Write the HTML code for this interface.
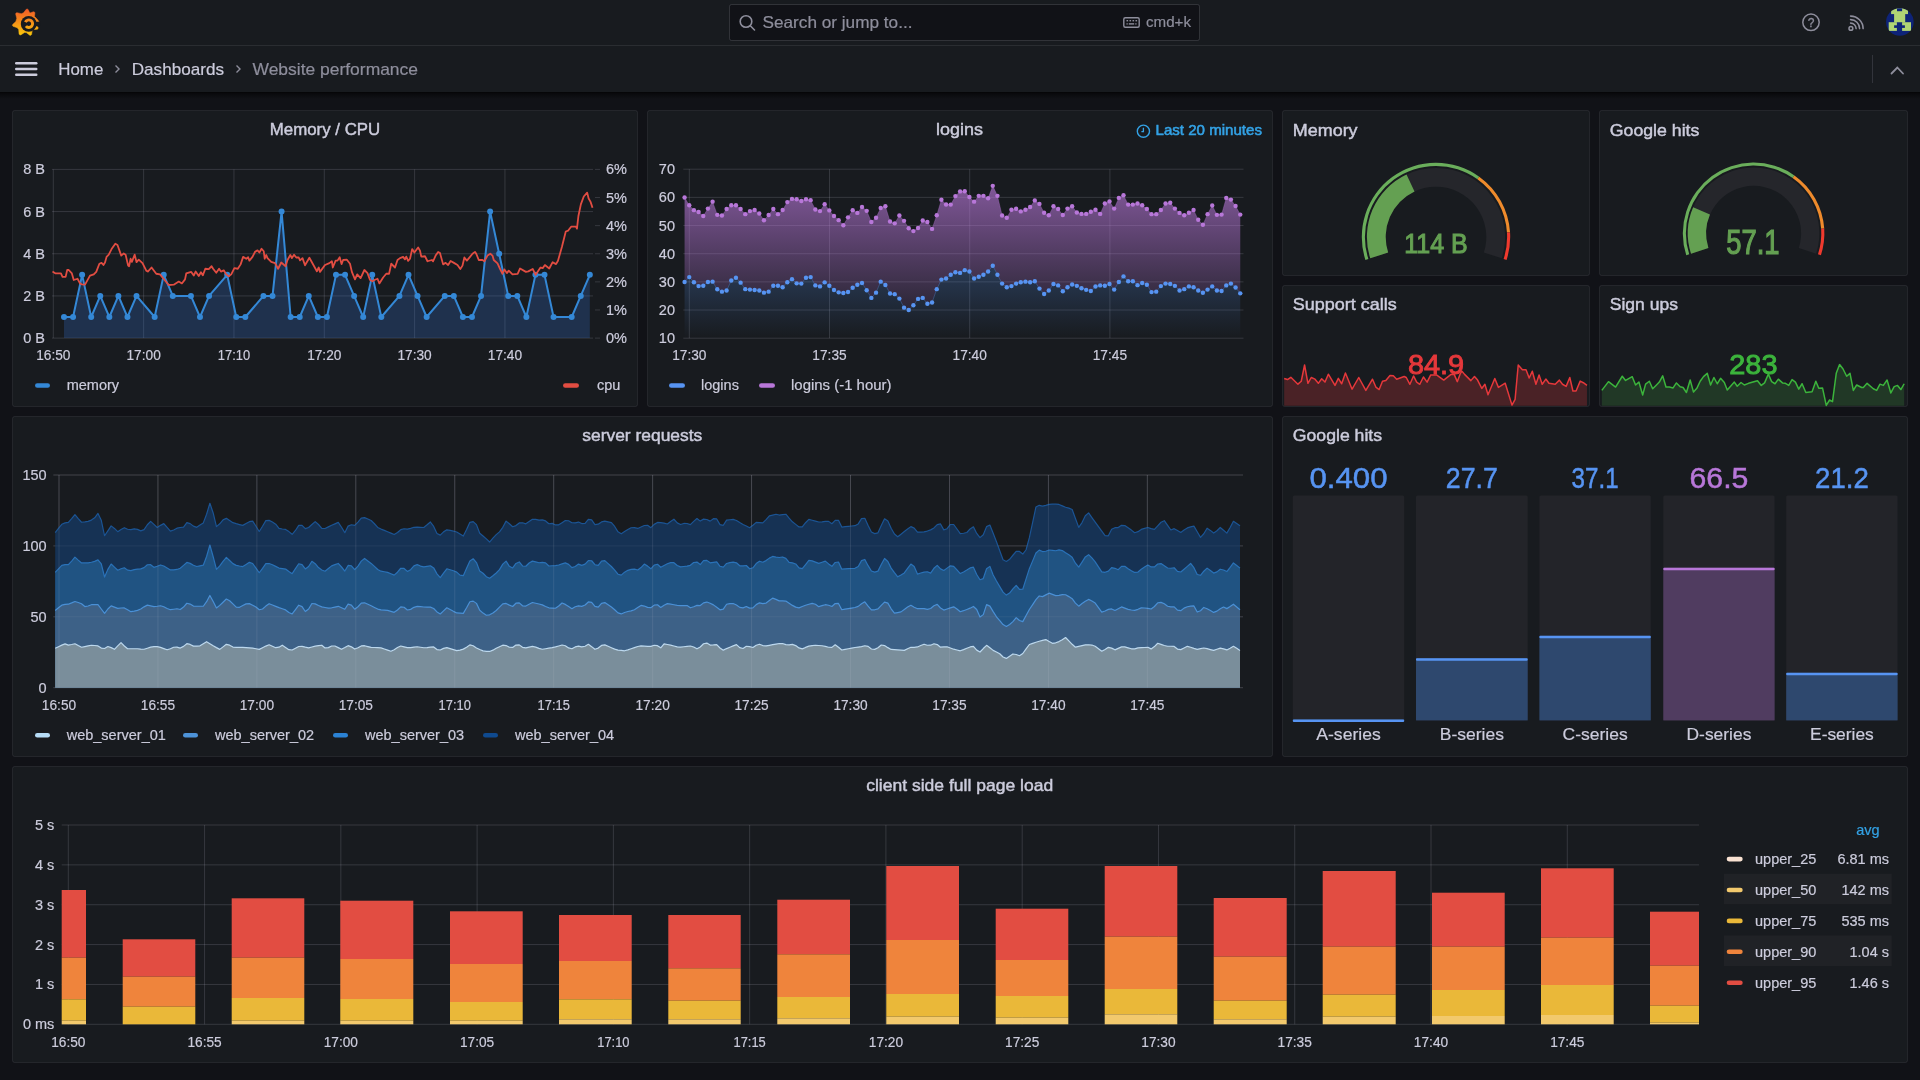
<!DOCTYPE html>
<html><head><meta charset="utf-8"><title>Website performance - Dashboards - Grafana</title>
<style>html,body{margin:0;padding:0;background:#111217;width:1920px;height:1080px;overflow:hidden} svg{will-change:transform}</style>
</head><body>
<svg width="1920" height="1080" viewBox="0 0 1920 1080" font-family='"Liberation Sans", sans-serif' style="display:block">
<defs>
<linearGradient id="gPurple" x1="0" y1="0" x2="0" y2="1" gradientUnits="userSpaceOnUse" gradientTransform=""><stop offset="0" stop-color="#b877d9" stop-opacity="0.55"/><stop offset="1" stop-color="#b877d9" stop-opacity="0"/></linearGradient>
<linearGradient id="gPur" x1="0" y1="169.2" x2="0" y2="338.2" gradientUnits="userSpaceOnUse"><stop offset="0" stop-color="#b877d9" stop-opacity="0.72"/><stop offset="1" stop-color="#b877d9" stop-opacity="0.0"/></linearGradient>
<linearGradient id="gBlu" x1="0" y1="169.2" x2="0" y2="338.2" gradientUnits="userSpaceOnUse"><stop offset="0" stop-color="#5794f2" stop-opacity="0.62"/><stop offset="1" stop-color="#5794f2" stop-opacity="0.0"/></linearGradient>
<radialGradient id="logoG" cx="0.5" cy="0.5" r="0.6" fx="0.5" fy="0.1"></radialGradient>
<linearGradient id="logoL" x1="0" y1="0" x2="0" y2="1"><stop offset="0" stop-color="#f05a28"/><stop offset="1" stop-color="#fbca0a"/></linearGradient>
</defs>
<rect width="1920" height="1080" fill="#111217"/>
<rect x="0" y="0" width="1920" height="92" fill="#181b1f"/>
<rect x="0" y="45" width="1920" height="1" fill="rgba(204,204,220,0.10)"/>
<linearGradient id="shad" x1="0" y1="92" x2="0" y2="99" gradientUnits="userSpaceOnUse"><stop offset="0" stop-color="#000" stop-opacity="0.75"/><stop offset="0.25" stop-color="#000" stop-opacity="0.45"/><stop offset="1" stop-color="#000" stop-opacity="0"/></linearGradient>
<rect x="0" y="92" width="1920" height="7" fill="url(#shad)"/>
<linearGradient id="logoL2" x1="0" y1="9" x2="0" y2="36" gradientUnits="userSpaceOnUse"><stop offset="0" stop-color="#f05a28"/><stop offset="1" stop-color="#fbca0a"/></linearGradient>
<polygon points="35.73,23.82 38.13,27.58 38.11,28.61 37.32,29.25 32.87,29.67 32.31,30.19 31.55,34.59 30.84,35.34 29.82,35.28 26.25,32.59 24.51,32.52 20.73,34.9 19.71,34.87 19.07,34.07 18.68,29.62 17.25,27.78 13.03,26.31 12.41,25.5 12.64,24.5 15.87,21.42 16.77,18.31 15.67,13.98 16.01,13.01 16.97,12.65 21.32,13.66 23.55,12.86 26.26,9.31 27.23,8.98 28.11,9.5 30.03,13.54 29.25,13.22 33.47,11.73 34.46,11.98 34.9,12.9 34.48,16.52 36.37,18.33 38.21,20.41 39.08,21.9 36.77,21.83" fill="url(#logoL2)" stroke="url(#logoL2)" stroke-width="0.5" stroke-linejoin="round"/>
<circle cx="28.7" cy="23.9" r="7.9" fill="#181b1f"/>
<polygon points="30,22.5 40.5,21.4 41,25 38.6,26.6 30,25.2" fill="#181b1f"/>
<path d="M 25.36 22.09 A 3.8 3.8 0 1 1 25.89 26.14" fill="none" stroke="url(#logoL2)" stroke-width="2.9"/>
<rect x="729.5" y="4.5" width="470" height="36" rx="2" fill="#111217" stroke="rgba(204,204,220,0.16)"/>
<circle cx="746" cy="21.5" r="5.8" fill="none" stroke="#8e8e9c" stroke-width="1.6"/>
<line x1="750.3" y1="25.8" x2="754.5" y2="30" stroke="#8e8e9c" stroke-width="1.6" stroke-linecap="round"/>
<text x="762.5" y="28" font-size="16.5" fill="#8e8e9c" stroke="#8e8e9c" stroke-width="0.2" textLength="150" lengthAdjust="spacingAndGlyphs" >Search or jump to...</text>
<rect x="1123.8" y="17.8" width="15.4" height="9.4" rx="1.5" fill="none" stroke="#8e8e9c" stroke-width="1.4"/>
<rect x="1126.5" y="20" width="1.6" height="1.4" fill="#8e8e9c"/>
<rect x="1129.5" y="20" width="1.6" height="1.4" fill="#8e8e9c"/>
<rect x="1132.5" y="20" width="1.6" height="1.4" fill="#8e8e9c"/>
<rect x="1135.5" y="20" width="1.6" height="1.4" fill="#8e8e9c"/>
<rect x="1126.5" y="23.2" width="1.2" height="1.4" fill="#8e8e9c"/><rect x="1128.8" y="23.2" width="5.4" height="1.4" fill="#8e8e9c"/><rect x="1135.3" y="23.2" width="1.2" height="1.4" fill="#8e8e9c"/>
<text x="1146" y="27" font-size="15" fill="#8e8e9c" stroke="#8e8e9c" stroke-width="0.2" textLength="45" lengthAdjust="spacingAndGlyphs" >cmd+k</text>
<circle cx="1811" cy="22.3" r="8.2" fill="none" stroke="#8e8e9c" stroke-width="1.5"/>
<text x="1811" y="26.8" font-size="12" fill="#8e8e9c" text-anchor="middle" stroke="#8e8e9c" stroke-width="0.3" >?</text>
<circle cx="1850.9" cy="28.4" r="1.9" fill="none" stroke="#8e8e9c" stroke-width="1.5"/>
<path d="M 1850.6 23.1 A 5.5 5.5 0 0 1 1856.1 28.6" fill="none" stroke="#8e8e9c" stroke-width="1.6" stroke-linecap="round"/>
<path d="M 1850.6 19.6 A 9.0 9.0 0 0 1 1859.6 28.6" fill="none" stroke="#8e8e9c" stroke-width="1.6" stroke-linecap="round"/>
<path d="M 1850.6 16.1 A 12.5 12.5 0 0 1 1863.1 28.6" fill="none" stroke="#8e8e9c" stroke-width="1.6" stroke-linecap="round"/>
<g><clipPath id="avc"><circle cx="1899.85" cy="22" r="13.8"/></clipPath><g clip-path="url(#avc)">
<rect x="1885" y="7" width="30" height="30" fill="#0e2378"/>
<rect x="1891.1" y="8" width="16.9" height="6.1" fill="#b0d474"/>
<rect x="1897" y="7" width="5.1" height="4.2" fill="#0e2378"/>
<rect x="1894.1" y="13.9" width="11.1" height="8.5" fill="#b0d474"/>
<rect x="1888.7" y="22.2" width="22.3" height="8.7" fill="#b0d474"/>
<rect x="1896.9" y="22.3" width="5.2" height="10" fill="#0e2378"/>
<rect x="1894.1" y="25.3" width="10.8" height="2.6" fill="#0e2378"/>
</g></g>
<rect x="15" y="62.0" width="22.5" height="2.4" rx="1.2" fill="#ccccdc"/>
<rect x="15" y="67.8" width="22.5" height="2.4" rx="1.2" fill="#ccccdc"/>
<rect x="15" y="73.5" width="22.5" height="2.4" rx="1.2" fill="#ccccdc"/>
<text x="58.3" y="75" font-size="17" fill="#ccccdc" stroke="#ccccdc" stroke-width="0.2" textLength="45" lengthAdjust="spacingAndGlyphs" >Home</text>
<path d="M 115.5 65.5 L 119 69 L 115.5 72.5" fill="none" stroke="#8e8e9c" stroke-width="1.4"/>
<text x="131.7" y="75" font-size="17" fill="#ccccdc" stroke="#ccccdc" stroke-width="0.2" textLength="92.3" lengthAdjust="spacingAndGlyphs" >Dashboards</text>
<path d="M 236.5 65.5 L 240 69 L 236.5 72.5" fill="none" stroke="#8e8e9c" stroke-width="1.4"/>
<text x="252.5" y="75" font-size="17" fill="#8e8e9c" stroke="#8e8e9c" stroke-width="0.2" textLength="165.5" lengthAdjust="spacingAndGlyphs" >Website performance</text>
<rect x="1872" y="55" width="1" height="28" fill="rgba(204,204,220,0.15)"/>
<path d="M 1891.5 73.5 L 1897.3 67.5 L 1903 73.5" fill="none" stroke="#8e8e9c" stroke-width="1.8" stroke-linecap="round"/>
<rect x="12.5" y="110.5" width="625" height="296" rx="2" fill="#181b1f" stroke="rgba(204,204,220,0.09)" stroke-width="1"/>
<text x="325" y="135.2" font-size="17" fill="#ccccdc" text-anchor="middle" stroke="#ccccdc" stroke-width="0.45" textLength="110.4" lengthAdjust="spacingAndGlyphs" >Memory / CPU</text>
<line x1="52" y1="338.1" x2="593" y2="338.1" stroke="rgba(204,204,220,0.17)" stroke-width="1"/>
<text x="45" y="343.1" font-size="14.5" fill="#ccccdc" text-anchor="end" stroke="#ccccdc" stroke-width="0.2" >0 B</text>
<line x1="52" y1="295.93" x2="593" y2="295.93" stroke="rgba(204,204,220,0.17)" stroke-width="1"/>
<text x="45" y="300.93" font-size="14.5" fill="#ccccdc" text-anchor="end" stroke="#ccccdc" stroke-width="0.2" >2 B</text>
<line x1="52" y1="253.75" x2="593" y2="253.75" stroke="rgba(204,204,220,0.17)" stroke-width="1"/>
<text x="45" y="258.75" font-size="14.5" fill="#ccccdc" text-anchor="end" stroke="#ccccdc" stroke-width="0.2" >4 B</text>
<line x1="52" y1="211.58" x2="593" y2="211.58" stroke="rgba(204,204,220,0.17)" stroke-width="1"/>
<text x="45" y="216.58" font-size="14.5" fill="#ccccdc" text-anchor="end" stroke="#ccccdc" stroke-width="0.2" >6 B</text>
<line x1="52" y1="169.4" x2="593" y2="169.4" stroke="rgba(204,204,220,0.17)" stroke-width="1"/>
<text x="45" y="174.4" font-size="14.5" fill="#ccccdc" text-anchor="end" stroke="#ccccdc" stroke-width="0.2" >8 B</text>
<line x1="53.3" y1="169.4" x2="53.3" y2="338.1" stroke="rgba(204,204,220,0.17)" stroke-width="1"/>
<text x="53.3" y="360" font-size="14.5" fill="#ccccdc" text-anchor="middle" stroke="#ccccdc" stroke-width="0.2" textLength="34.28" lengthAdjust="spacingAndGlyphs" >16:50</text>
<line x1="143.63" y1="169.4" x2="143.63" y2="338.1" stroke="rgba(204,204,220,0.17)" stroke-width="1"/>
<text x="143.63" y="360" font-size="14.5" fill="#ccccdc" text-anchor="middle" stroke="#ccccdc" stroke-width="0.2" textLength="34.28" lengthAdjust="spacingAndGlyphs" >17:00</text>
<line x1="233.96" y1="169.4" x2="233.96" y2="338.1" stroke="rgba(204,204,220,0.17)" stroke-width="1"/>
<text x="233.96" y="360" font-size="14.5" fill="#ccccdc" text-anchor="middle" stroke="#ccccdc" stroke-width="0.2" textLength="32.28" lengthAdjust="spacingAndGlyphs" >17:10</text>
<line x1="324.29" y1="169.4" x2="324.29" y2="338.1" stroke="rgba(204,204,220,0.17)" stroke-width="1"/>
<text x="324.29" y="360" font-size="14.5" fill="#ccccdc" text-anchor="middle" stroke="#ccccdc" stroke-width="0.2" textLength="34.28" lengthAdjust="spacingAndGlyphs" >17:20</text>
<line x1="414.62" y1="169.4" x2="414.62" y2="338.1" stroke="rgba(204,204,220,0.17)" stroke-width="1"/>
<text x="414.62" y="360" font-size="14.5" fill="#ccccdc" text-anchor="middle" stroke="#ccccdc" stroke-width="0.2" textLength="34.28" lengthAdjust="spacingAndGlyphs" >17:30</text>
<line x1="504.95" y1="169.4" x2="504.95" y2="338.1" stroke="rgba(204,204,220,0.17)" stroke-width="1"/>
<text x="504.95" y="360" font-size="14.5" fill="#ccccdc" text-anchor="middle" stroke="#ccccdc" stroke-width="0.2" textLength="34.28" lengthAdjust="spacingAndGlyphs" >17:40</text>
<line x1="595" y1="338.1" x2="600" y2="338.1" stroke="rgba(204,204,220,0.17)" stroke-width="1"/>
<text x="606" y="343.1" font-size="14.5" fill="#ccccdc" stroke="#ccccdc" stroke-width="0.2" >0%</text>
<line x1="595" y1="309.98" x2="600" y2="309.98" stroke="rgba(204,204,220,0.17)" stroke-width="1"/>
<text x="606" y="314.98" font-size="14.5" fill="#ccccdc" stroke="#ccccdc" stroke-width="0.2" >1%</text>
<line x1="595" y1="281.87" x2="600" y2="281.87" stroke="rgba(204,204,220,0.17)" stroke-width="1"/>
<text x="606" y="286.87" font-size="14.5" fill="#ccccdc" stroke="#ccccdc" stroke-width="0.2" >2%</text>
<line x1="595" y1="253.75" x2="600" y2="253.75" stroke="rgba(204,204,220,0.17)" stroke-width="1"/>
<text x="606" y="258.75" font-size="14.5" fill="#ccccdc" stroke="#ccccdc" stroke-width="0.2" >3%</text>
<line x1="595" y1="225.63" x2="600" y2="225.63" stroke="rgba(204,204,220,0.17)" stroke-width="1"/>
<text x="606" y="230.63" font-size="14.5" fill="#ccccdc" stroke="#ccccdc" stroke-width="0.2" >4%</text>
<line x1="595" y1="197.52" x2="600" y2="197.52" stroke="rgba(204,204,220,0.17)" stroke-width="1"/>
<text x="606" y="202.52" font-size="14.5" fill="#ccccdc" stroke="#ccccdc" stroke-width="0.2" >5%</text>
<line x1="595" y1="169.4" x2="600" y2="169.4" stroke="rgba(204,204,220,0.17)" stroke-width="1"/>
<text x="606" y="174.4" font-size="14.5" fill="#ccccdc" stroke="#ccccdc" stroke-width="0.2" >6%</text>
<polygon points="64,338.1 64,317.01 73.07,317.01 82.13,274.84 91.2,317.01 100.26,295.93 109.33,317.01 118.4,295.93 127.46,317.01 136.53,295.93 154.66,317.01 163.73,274.84 172.79,295.93 190.92,295.93 199.99,317.01 209.06,295.93 227.19,274.84 236.25,317.01 245.32,317.01 263.45,295.93 272.52,295.93 281.58,211.58 290.65,317.01 299.72,317.01 308.78,295.93 317.85,317.01 326.91,317.01 335.98,274.84 345.05,274.84 354.11,295.93 363.18,317.01 372.24,274.84 381.31,317.01 399.44,295.93 408.51,274.84 417.57,295.93 426.64,317.01 444.77,295.93 453.84,295.93 462.9,317.01 471.97,317.01 481.04,295.93 490.1,211.58 499.17,253.75 508.23,295.93 517.3,295.93 526.37,317.01 535.43,274.84 544.5,274.84 553.56,317.01 571.7,317.01 580.76,295.93 589.83,274.84 589.83,338.1" fill="#3274d9" fill-opacity="0.25"/>
<polyline points="64,317.01 73.07,317.01 82.13,274.84 91.2,317.01 100.26,295.93 109.33,317.01 118.4,295.93 127.46,317.01 136.53,295.93 154.66,317.01 163.73,274.84 172.79,295.93 190.92,295.93 199.99,317.01 209.06,295.93 227.19,274.84 236.25,317.01 245.32,317.01 263.45,295.93 272.52,295.93 281.58,211.58 290.65,317.01 299.72,317.01 308.78,295.93 317.85,317.01 326.91,317.01 335.98,274.84 345.05,274.84 354.11,295.93 363.18,317.01 372.24,274.84 381.31,317.01 399.44,295.93 408.51,274.84 417.57,295.93 426.64,317.01 444.77,295.93 453.84,295.93 462.9,317.01 471.97,317.01 481.04,295.93 490.1,211.58 499.17,253.75 508.23,295.93 517.3,295.93 526.37,317.01 535.43,274.84 544.5,274.84 553.56,317.01 571.7,317.01 580.76,295.93 589.83,274.84" fill="none" stroke="#3488d6" stroke-width="2" stroke-linejoin="round"/>
<circle cx="64" cy="317.01" r="3" fill="#3488d6"/>
<circle cx="73.07" cy="317.01" r="3" fill="#3488d6"/>
<circle cx="82.13" cy="274.84" r="3" fill="#3488d6"/>
<circle cx="91.2" cy="317.01" r="3" fill="#3488d6"/>
<circle cx="100.26" cy="295.93" r="3" fill="#3488d6"/>
<circle cx="109.33" cy="317.01" r="3" fill="#3488d6"/>
<circle cx="118.4" cy="295.93" r="3" fill="#3488d6"/>
<circle cx="127.46" cy="317.01" r="3" fill="#3488d6"/>
<circle cx="136.53" cy="295.93" r="3" fill="#3488d6"/>
<circle cx="154.66" cy="317.01" r="3" fill="#3488d6"/>
<circle cx="163.73" cy="274.84" r="3" fill="#3488d6"/>
<circle cx="172.79" cy="295.93" r="3" fill="#3488d6"/>
<circle cx="190.92" cy="295.93" r="3" fill="#3488d6"/>
<circle cx="199.99" cy="317.01" r="3" fill="#3488d6"/>
<circle cx="209.06" cy="295.93" r="3" fill="#3488d6"/>
<circle cx="227.19" cy="274.84" r="3" fill="#3488d6"/>
<circle cx="236.25" cy="317.01" r="3" fill="#3488d6"/>
<circle cx="245.32" cy="317.01" r="3" fill="#3488d6"/>
<circle cx="263.45" cy="295.93" r="3" fill="#3488d6"/>
<circle cx="272.52" cy="295.93" r="3" fill="#3488d6"/>
<circle cx="281.58" cy="211.58" r="3" fill="#3488d6"/>
<circle cx="290.65" cy="317.01" r="3" fill="#3488d6"/>
<circle cx="299.72" cy="317.01" r="3" fill="#3488d6"/>
<circle cx="308.78" cy="295.93" r="3" fill="#3488d6"/>
<circle cx="317.85" cy="317.01" r="3" fill="#3488d6"/>
<circle cx="326.91" cy="317.01" r="3" fill="#3488d6"/>
<circle cx="335.98" cy="274.84" r="3" fill="#3488d6"/>
<circle cx="345.05" cy="274.84" r="3" fill="#3488d6"/>
<circle cx="354.11" cy="295.93" r="3" fill="#3488d6"/>
<circle cx="363.18" cy="317.01" r="3" fill="#3488d6"/>
<circle cx="372.24" cy="274.84" r="3" fill="#3488d6"/>
<circle cx="381.31" cy="317.01" r="3" fill="#3488d6"/>
<circle cx="399.44" cy="295.93" r="3" fill="#3488d6"/>
<circle cx="408.51" cy="274.84" r="3" fill="#3488d6"/>
<circle cx="417.57" cy="295.93" r="3" fill="#3488d6"/>
<circle cx="426.64" cy="317.01" r="3" fill="#3488d6"/>
<circle cx="444.77" cy="295.93" r="3" fill="#3488d6"/>
<circle cx="453.84" cy="295.93" r="3" fill="#3488d6"/>
<circle cx="462.9" cy="317.01" r="3" fill="#3488d6"/>
<circle cx="471.97" cy="317.01" r="3" fill="#3488d6"/>
<circle cx="481.04" cy="295.93" r="3" fill="#3488d6"/>
<circle cx="490.1" cy="211.58" r="3" fill="#3488d6"/>
<circle cx="499.17" cy="253.75" r="3" fill="#3488d6"/>
<circle cx="508.23" cy="295.93" r="3" fill="#3488d6"/>
<circle cx="517.3" cy="295.93" r="3" fill="#3488d6"/>
<circle cx="526.37" cy="317.01" r="3" fill="#3488d6"/>
<circle cx="535.43" cy="274.84" r="3" fill="#3488d6"/>
<circle cx="544.5" cy="274.84" r="3" fill="#3488d6"/>
<circle cx="553.56" cy="317.01" r="3" fill="#3488d6"/>
<circle cx="571.7" cy="317.01" r="3" fill="#3488d6"/>
<circle cx="580.76" cy="295.93" r="3" fill="#3488d6"/>
<circle cx="589.83" cy="274.84" r="3" fill="#3488d6"/>
<polyline points="52.5,271.56 55.62,273.44 60.94,273.44 62.5,276.88 65.62,276.88 67.19,270 68.75,270 71.88,273.44 73.75,280 77.5,278.75 80,283.44 81.88,284.38 85,284.69 90,275.62 93.75,274.38 96.25,271.88 99.38,263.75 101.56,262.81 103.44,265 105,262.5 106.56,256.88 108.75,254.69 111.56,249.06 115.31,243.75 117.5,245 121.25,255.62 123.75,253.44 125.62,254.69 128.12,265.62 129.06,266.25 130.62,258.75 131.88,261.88 134.69,254.69 136.56,262.19 138.75,259.69 142.5,263.12 146.25,270.62 147.81,271.56 151.56,267.5 156.25,273.75 160,274.38 162.5,277.5 168.75,285 173.75,284.69 178.75,281.56 181.88,283.44 185,279.38 186.25,273.44 191.25,271.88 193.75,275.62 195.62,271.56 198.75,275.94 200.94,272.19 202.81,275.31 205.31,268.75 208.75,269.06 211.56,266.25 213.12,268.75 216.25,272.81 219.06,268.75 220.94,271.56 223.75,270.31 226.25,274.38 228.75,276.25 231.25,274.38 234.38,268.12 237.81,268.75 240.62,264.38 243.12,256.88 246.25,258.75 248.12,257.19 249.38,260.62 252.5,256.88 255,251.88 257.5,250.31 259.38,252.5 261.56,248.75 263.75,251.25 264.69,258.75 266.25,255 267.5,258.12 271.25,261.88 275,263.12 278.12,268.75 281.25,262.5 285.62,266.25 287.5,260 290.31,255 291.88,258.12 294.06,254.69 296.25,257.5 298.75,257.5 300,260.31 302.5,258.12 305,265.31 309.38,257.81 316.88,271.25 318.75,267.5 320,271.88 325,265 329.38,263.12 331.88,261.25 332.81,267.5 335.62,260.62 337.5,260.62 339.69,257.19 341.56,264.06 343.12,260 346.88,259.69 350,263.75 351.88,271.88 355,279.38 357.19,274.38 360.62,278.12 364.38,270 367.5,273.12 370,280 372.5,281.25 374.38,280 377.5,278.75 379.38,283.44 383.12,277.5 386.25,273.75 389.06,273.75 391.25,263.75 395,267.5 397.5,260 400,258.12 403.12,256.88 405,259.38 406.25,256.56 408.12,260.94 410,258.75 412.19,249.06 414.38,252.5 418.12,247.5 420,250.62 421.25,256.56 425,256.25 427.5,261.25 431.88,260 433.12,261.25 435.62,255.62 438.12,251.88 440,253.12 443.12,264.38 445.62,262.81 448.12,265 450.62,260.94 454.38,263.12 457.5,265 460.31,269.06 462.5,265.62 464.38,257.5 466.88,260.62 470,256.88 472.5,253.75 475,251.88 476.25,253.75 478.75,260 482.5,260 484.38,261.25 487.5,255.62 490.31,253.75 492.5,255.62 493.75,260 497.5,263.44 500,268.75 502.5,273.75 504.38,269.38 506.88,273.12 508.75,270.62 512.5,274.38 517.64,273.84 520.07,268.49 525.91,271.89 528.34,271.4 532.71,268.97 535.63,274.81 540.49,267.51 542.92,268 544.87,265.08 549.24,268.49 552.65,262.17 556.05,264.11 557.99,260.71 561.88,247.09 565.77,231.54 568.2,230.56 571.12,226.67 575.98,226.67 576.96,228.62 578.42,215.98 580.85,204.31 583.76,196.53 587.17,192.64 588.63,198.48 590.57,201.88 592.51,207.71" fill="none" stroke="#e24d42" stroke-width="1.8" stroke-linejoin="round"/>
<rect x="35" y="383.2" width="15" height="4.6" rx="2.3" fill="#3488d6"/>
<text x="66.7" y="390" font-size="14.5" fill="#ccccdc" stroke="#ccccdc" stroke-width="0.2" >memory</text>
<rect x="563" y="383.2" width="16" height="4.6" rx="2.3" fill="#e24d42"/>
<text x="597" y="390" font-size="14.5" fill="#ccccdc" stroke="#ccccdc" stroke-width="0.2" >cpu</text>
<rect x="647.5" y="110.5" width="625" height="296" rx="2" fill="#181b1f" stroke="rgba(204,204,220,0.09)" stroke-width="1"/>
<text x="959.5" y="135.2" font-size="17" fill="#ccccdc" text-anchor="middle" stroke="#ccccdc" stroke-width="0.45" textLength="47" lengthAdjust="spacingAndGlyphs" >logins</text>
<circle cx="1143.4" cy="131.2" r="6.1" fill="none" stroke="#33a2e5" stroke-width="1.4"/>
<path d="M 1143.4 127.8 V 131.6 H 1141.4" fill="none" stroke="#33a2e5" stroke-width="1.3"/>
<text x="1155.5" y="134.8" font-size="14.5" fill="#33a2e5" stroke="#33a2e5" stroke-width="0.55" textLength="106.5" lengthAdjust="spacingAndGlyphs" >Last 20 minutes</text>
<line x1="683.3" y1="338.2" x2="1243.5" y2="338.2" stroke="rgba(204,204,220,0.17)" stroke-width="1"/>
<text x="675" y="343.2" font-size="14.5" fill="#ccccdc" text-anchor="end" stroke="#ccccdc" stroke-width="0.2" >10</text>
<line x1="683.3" y1="310.03" x2="1243.5" y2="310.03" stroke="rgba(204,204,220,0.17)" stroke-width="1"/>
<text x="675" y="315.03" font-size="14.5" fill="#ccccdc" text-anchor="end" stroke="#ccccdc" stroke-width="0.2" >20</text>
<line x1="683.3" y1="281.87" x2="1243.5" y2="281.87" stroke="rgba(204,204,220,0.17)" stroke-width="1"/>
<text x="675" y="286.87" font-size="14.5" fill="#ccccdc" text-anchor="end" stroke="#ccccdc" stroke-width="0.2" >30</text>
<line x1="683.3" y1="253.7" x2="1243.5" y2="253.7" stroke="rgba(204,204,220,0.17)" stroke-width="1"/>
<text x="675" y="258.7" font-size="14.5" fill="#ccccdc" text-anchor="end" stroke="#ccccdc" stroke-width="0.2" >40</text>
<line x1="683.3" y1="225.53" x2="1243.5" y2="225.53" stroke="rgba(204,204,220,0.17)" stroke-width="1"/>
<text x="675" y="230.53" font-size="14.5" fill="#ccccdc" text-anchor="end" stroke="#ccccdc" stroke-width="0.2" >50</text>
<line x1="683.3" y1="197.37" x2="1243.5" y2="197.37" stroke="rgba(204,204,220,0.17)" stroke-width="1"/>
<text x="675" y="202.37" font-size="14.5" fill="#ccccdc" text-anchor="end" stroke="#ccccdc" stroke-width="0.2" >60</text>
<line x1="683.3" y1="169.2" x2="1243.5" y2="169.2" stroke="rgba(204,204,220,0.17)" stroke-width="1"/>
<text x="675" y="174.2" font-size="14.5" fill="#ccccdc" text-anchor="end" stroke="#ccccdc" stroke-width="0.2" >70</text>
<line x1="689.3" y1="169.2" x2="689.3" y2="338.2" stroke="rgba(204,204,220,0.17)" stroke-width="1"/>
<text x="689.3" y="360" font-size="14.5" fill="#ccccdc" text-anchor="middle" stroke="#ccccdc" stroke-width="0.2" textLength="34.28" lengthAdjust="spacingAndGlyphs" >17:30</text>
<line x1="829.5" y1="169.2" x2="829.5" y2="338.2" stroke="rgba(204,204,220,0.17)" stroke-width="1"/>
<text x="829.5" y="360" font-size="14.5" fill="#ccccdc" text-anchor="middle" stroke="#ccccdc" stroke-width="0.2" textLength="34.28" lengthAdjust="spacingAndGlyphs" >17:35</text>
<line x1="969.7" y1="169.2" x2="969.7" y2="338.2" stroke="rgba(204,204,220,0.17)" stroke-width="1"/>
<text x="969.7" y="360" font-size="14.5" fill="#ccccdc" text-anchor="middle" stroke="#ccccdc" stroke-width="0.2" textLength="34.28" lengthAdjust="spacingAndGlyphs" >17:40</text>
<line x1="1109.9" y1="169.2" x2="1109.9" y2="338.2" stroke="rgba(204,204,220,0.17)" stroke-width="1"/>
<text x="1109.9" y="360" font-size="14.5" fill="#ccccdc" text-anchor="middle" stroke="#ccccdc" stroke-width="0.2" textLength="34.28" lengthAdjust="spacingAndGlyphs" >17:45</text>
<polygon points="684.58,197.5 689.25,205.28 693.92,210.14 698.59,211.94 703.26,215.97 707.93,208.61 712.6,201.67 717.27,214.86 721.94,215.56 726.61,209.03 731.27,205.28 735.94,205.28 740.61,209.03 745.28,214.17 749.95,211.11 754.62,210 759.29,213.47 763.96,220.28 768.63,215 773.3,209.03 777.97,214.17 782.64,210 787.31,202.08 791.98,198.89 796.65,199.31 801.32,200.97 805.99,199.31 810.66,200.14 815.33,209.44 820,211.11 824.66,204.17 829.33,210.42 834,215.97 838.67,220.14 843.34,225.28 848.01,217.36 852.68,210.14 857.35,212.92 862.02,206.94 866.69,210.83 871.36,221.94 876.03,217.78 880.7,208.06 885.37,206.25 890.04,221.53 894.71,223.33 899.38,215.56 904.05,220.83 908.72,228.19 913.39,231.11 918.05,228.06 922.72,220.56 927.39,221.94 932.06,228.89 936.73,215.28 941.4,199.72 946.07,204.44 950.74,204.58 955.41,196.11 960.08,191.39 964.75,191.25 969.42,196.94 974.09,201.67 978.76,195.83 983.43,195.83 988.1,198.19 992.77,185.83 997.44,195.83 1002.11,215.56 1006.78,217.78 1011.44,209.72 1016.11,208.75 1020.78,211.39 1025.45,209.72 1030.12,206.94 1034.79,200.42 1039.46,203.89 1044.13,212.78 1048.8,215.28 1053.47,206.25 1058.14,209.03 1062.81,215 1067.48,208.61 1072.15,206.25 1076.82,212.5 1081.49,213.89 1086.16,213.89 1090.83,211.81 1095.5,209.72 1100.17,213.89 1104.83,203.47 1109.5,201.39 1114.17,208.61 1118.84,197.92 1123.51,195.14 1128.18,204.58 1132.85,204.58 1137.52,203.47 1142.19,205.28 1146.86,209.03 1151.53,214.17 1156.2,214.17 1160.87,210 1165.54,203.47 1170.21,202.78 1174.88,208.61 1179.55,212.92 1184.22,215.28 1188.89,212.78 1193.56,210 1198.22,219.72 1202.89,224.72 1207.56,214.17 1212.23,205.56 1216.9,214.86 1221.57,214.58 1226.24,197.92 1230.91,199.58 1235.58,205.97 1240.25,214.58 1240.25,293.33 1235.58,287.5 1230.91,283.61 1226.24,285.42 1221.57,290.97 1216.9,290.56 1212.23,286.39 1207.56,289.58 1202.89,292.78 1198.22,290.56 1193.56,287.22 1188.89,286.39 1184.22,289.17 1179.55,290.56 1174.88,285.83 1170.21,284.03 1165.54,283.61 1160.87,286.11 1156.2,291.67 1151.53,292.08 1146.86,284.72 1142.19,283.06 1137.52,285.14 1132.85,281.25 1128.18,281.25 1123.51,276.39 1118.84,281.94 1114.17,289.58 1109.5,284.03 1104.83,285.69 1100.17,285.42 1095.5,286.53 1090.83,290.97 1086.16,289.86 1081.49,288.19 1076.82,285.83 1072.15,284.44 1067.48,287.22 1062.81,291.25 1058.14,285.42 1053.47,284.03 1048.8,290.56 1044.13,294.03 1039.46,288.61 1034.79,281.25 1030.12,282.22 1025.45,281.67 1020.78,282.22 1016.11,283.61 1011.44,286.11 1006.78,287.22 1002.11,283.61 997.44,274.72 992.77,265.69 988.1,271.53 983.43,274.72 978.76,276.81 974.09,278.47 969.42,271.53 964.75,270.14 960.08,272.92 955.41,272.22 950.74,274.72 946.07,278.47 941.4,279.58 936.73,289.17 932.06,302.5 927.39,303.75 922.72,297.92 918.05,298.89 913.39,305.28 908.72,310 904.05,307.64 899.38,298.61 894.71,294.17 890.04,293.47 885.37,285 880.7,281.67 876.03,292.64 871.36,297.92 866.69,290.28 862.02,283.06 857.35,284.72 852.68,287.78 848.01,291.94 843.34,293.06 838.67,292.36 834,290 829.33,285.69 824.66,282.36 820,286.39 815.33,285.42 810.66,277.08 805.99,277.78 801.32,283.61 796.65,283.33 791.98,279.17 787.31,282.22 782.64,287.22 777.97,285.69 773.3,285.69 768.63,291.67 763.96,292.64 759.29,290.56 754.62,290 749.95,289.58 745.28,289.17 740.61,282.64 735.94,277.78 731.27,280.56 726.61,290.56 721.94,291.67 717.27,289.31 712.6,281.67 707.93,281.94 703.26,285.69 698.59,286.11 693.92,282.22 689.25,277.08 684.58,281.94" fill="url(#gPur)"/>
<polygon points="684.58,338.2 684.58,281.94 689.25,277.08 693.92,282.22 698.59,286.11 703.26,285.69 707.93,281.94 712.6,281.67 717.27,289.31 721.94,291.67 726.61,290.56 731.27,280.56 735.94,277.78 740.61,282.64 745.28,289.17 749.95,289.58 754.62,290 759.29,290.56 763.96,292.64 768.63,291.67 773.3,285.69 777.97,285.69 782.64,287.22 787.31,282.22 791.98,279.17 796.65,283.33 801.32,283.61 805.99,277.78 810.66,277.08 815.33,285.42 820,286.39 824.66,282.36 829.33,285.69 834,290 838.67,292.36 843.34,293.06 848.01,291.94 852.68,287.78 857.35,284.72 862.02,283.06 866.69,290.28 871.36,297.92 876.03,292.64 880.7,281.67 885.37,285 890.04,293.47 894.71,294.17 899.38,298.61 904.05,307.64 908.72,310 913.39,305.28 918.05,298.89 922.72,297.92 927.39,303.75 932.06,302.5 936.73,289.17 941.4,279.58 946.07,278.47 950.74,274.72 955.41,272.22 960.08,272.92 964.75,270.14 969.42,271.53 974.09,278.47 978.76,276.81 983.43,274.72 988.1,271.53 992.77,265.69 997.44,274.72 1002.11,283.61 1006.78,287.22 1011.44,286.11 1016.11,283.61 1020.78,282.22 1025.45,281.67 1030.12,282.22 1034.79,281.25 1039.46,288.61 1044.13,294.03 1048.8,290.56 1053.47,284.03 1058.14,285.42 1062.81,291.25 1067.48,287.22 1072.15,284.44 1076.82,285.83 1081.49,288.19 1086.16,289.86 1090.83,290.97 1095.5,286.53 1100.17,285.42 1104.83,285.69 1109.5,284.03 1114.17,289.58 1118.84,281.94 1123.51,276.39 1128.18,281.25 1132.85,281.25 1137.52,285.14 1142.19,283.06 1146.86,284.72 1151.53,292.08 1156.2,291.67 1160.87,286.11 1165.54,283.61 1170.21,284.03 1174.88,285.83 1179.55,290.56 1184.22,289.17 1188.89,286.39 1193.56,287.22 1198.22,290.56 1202.89,292.78 1207.56,289.58 1212.23,286.39 1216.9,290.56 1221.57,290.97 1226.24,285.42 1230.91,283.61 1235.58,287.5 1240.25,293.33 1240.25,338.2" fill="url(#gBlu)"/>
<polyline points="684.58,197.5 689.25,205.28 693.92,210.14 698.59,211.94 703.26,215.97 707.93,208.61 712.6,201.67 717.27,214.86 721.94,215.56 726.61,209.03 731.27,205.28 735.94,205.28 740.61,209.03 745.28,214.17 749.95,211.11 754.62,210 759.29,213.47 763.96,220.28 768.63,215 773.3,209.03 777.97,214.17 782.64,210 787.31,202.08 791.98,198.89 796.65,199.31 801.32,200.97 805.99,199.31 810.66,200.14 815.33,209.44 820,211.11 824.66,204.17 829.33,210.42 834,215.97 838.67,220.14 843.34,225.28 848.01,217.36 852.68,210.14 857.35,212.92 862.02,206.94 866.69,210.83 871.36,221.94 876.03,217.78 880.7,208.06 885.37,206.25 890.04,221.53 894.71,223.33 899.38,215.56 904.05,220.83 908.72,228.19 913.39,231.11 918.05,228.06 922.72,220.56 927.39,221.94 932.06,228.89 936.73,215.28 941.4,199.72 946.07,204.44 950.74,204.58 955.41,196.11 960.08,191.39 964.75,191.25 969.42,196.94 974.09,201.67 978.76,195.83 983.43,195.83 988.1,198.19 992.77,185.83 997.44,195.83 1002.11,215.56 1006.78,217.78 1011.44,209.72 1016.11,208.75 1020.78,211.39 1025.45,209.72 1030.12,206.94 1034.79,200.42 1039.46,203.89 1044.13,212.78 1048.8,215.28 1053.47,206.25 1058.14,209.03 1062.81,215 1067.48,208.61 1072.15,206.25 1076.82,212.5 1081.49,213.89 1086.16,213.89 1090.83,211.81 1095.5,209.72 1100.17,213.89 1104.83,203.47 1109.5,201.39 1114.17,208.61 1118.84,197.92 1123.51,195.14 1128.18,204.58 1132.85,204.58 1137.52,203.47 1142.19,205.28 1146.86,209.03 1151.53,214.17 1156.2,214.17 1160.87,210 1165.54,203.47 1170.21,202.78 1174.88,208.61 1179.55,212.92 1184.22,215.28 1188.89,212.78 1193.56,210 1198.22,219.72 1202.89,224.72 1207.56,214.17 1212.23,205.56 1216.9,214.86 1221.57,214.58 1226.24,197.92 1230.91,199.58 1235.58,205.97 1240.25,214.58" fill="none" stroke="#b877d9" stroke-width="1" stroke-opacity="0.3"/>
<polyline points="684.58,281.94 689.25,277.08 693.92,282.22 698.59,286.11 703.26,285.69 707.93,281.94 712.6,281.67 717.27,289.31 721.94,291.67 726.61,290.56 731.27,280.56 735.94,277.78 740.61,282.64 745.28,289.17 749.95,289.58 754.62,290 759.29,290.56 763.96,292.64 768.63,291.67 773.3,285.69 777.97,285.69 782.64,287.22 787.31,282.22 791.98,279.17 796.65,283.33 801.32,283.61 805.99,277.78 810.66,277.08 815.33,285.42 820,286.39 824.66,282.36 829.33,285.69 834,290 838.67,292.36 843.34,293.06 848.01,291.94 852.68,287.78 857.35,284.72 862.02,283.06 866.69,290.28 871.36,297.92 876.03,292.64 880.7,281.67 885.37,285 890.04,293.47 894.71,294.17 899.38,298.61 904.05,307.64 908.72,310 913.39,305.28 918.05,298.89 922.72,297.92 927.39,303.75 932.06,302.5 936.73,289.17 941.4,279.58 946.07,278.47 950.74,274.72 955.41,272.22 960.08,272.92 964.75,270.14 969.42,271.53 974.09,278.47 978.76,276.81 983.43,274.72 988.1,271.53 992.77,265.69 997.44,274.72 1002.11,283.61 1006.78,287.22 1011.44,286.11 1016.11,283.61 1020.78,282.22 1025.45,281.67 1030.12,282.22 1034.79,281.25 1039.46,288.61 1044.13,294.03 1048.8,290.56 1053.47,284.03 1058.14,285.42 1062.81,291.25 1067.48,287.22 1072.15,284.44 1076.82,285.83 1081.49,288.19 1086.16,289.86 1090.83,290.97 1095.5,286.53 1100.17,285.42 1104.83,285.69 1109.5,284.03 1114.17,289.58 1118.84,281.94 1123.51,276.39 1128.18,281.25 1132.85,281.25 1137.52,285.14 1142.19,283.06 1146.86,284.72 1151.53,292.08 1156.2,291.67 1160.87,286.11 1165.54,283.61 1170.21,284.03 1174.88,285.83 1179.55,290.56 1184.22,289.17 1188.89,286.39 1193.56,287.22 1198.22,290.56 1202.89,292.78 1207.56,289.58 1212.23,286.39 1216.9,290.56 1221.57,290.97 1226.24,285.42 1230.91,283.61 1235.58,287.5 1240.25,293.33" fill="none" stroke="#5794f2" stroke-width="1" stroke-opacity="0.3"/>
<circle cx="684.58" cy="197.5" r="2.2" fill="#b877d9"/>
<circle cx="689.25" cy="205.28" r="2.2" fill="#b877d9"/>
<circle cx="693.92" cy="210.14" r="2.2" fill="#b877d9"/>
<circle cx="698.59" cy="211.94" r="2.2" fill="#b877d9"/>
<circle cx="703.26" cy="215.97" r="2.2" fill="#b877d9"/>
<circle cx="707.93" cy="208.61" r="2.2" fill="#b877d9"/>
<circle cx="712.6" cy="201.67" r="2.2" fill="#b877d9"/>
<circle cx="717.27" cy="214.86" r="2.2" fill="#b877d9"/>
<circle cx="721.94" cy="215.56" r="2.2" fill="#b877d9"/>
<circle cx="726.61" cy="209.03" r="2.2" fill="#b877d9"/>
<circle cx="731.27" cy="205.28" r="2.2" fill="#b877d9"/>
<circle cx="735.94" cy="205.28" r="2.2" fill="#b877d9"/>
<circle cx="740.61" cy="209.03" r="2.2" fill="#b877d9"/>
<circle cx="745.28" cy="214.17" r="2.2" fill="#b877d9"/>
<circle cx="749.95" cy="211.11" r="2.2" fill="#b877d9"/>
<circle cx="754.62" cy="210" r="2.2" fill="#b877d9"/>
<circle cx="759.29" cy="213.47" r="2.2" fill="#b877d9"/>
<circle cx="763.96" cy="220.28" r="2.2" fill="#b877d9"/>
<circle cx="768.63" cy="215" r="2.2" fill="#b877d9"/>
<circle cx="773.3" cy="209.03" r="2.2" fill="#b877d9"/>
<circle cx="777.97" cy="214.17" r="2.2" fill="#b877d9"/>
<circle cx="782.64" cy="210" r="2.2" fill="#b877d9"/>
<circle cx="787.31" cy="202.08" r="2.2" fill="#b877d9"/>
<circle cx="791.98" cy="198.89" r="2.2" fill="#b877d9"/>
<circle cx="796.65" cy="199.31" r="2.2" fill="#b877d9"/>
<circle cx="801.32" cy="200.97" r="2.2" fill="#b877d9"/>
<circle cx="805.99" cy="199.31" r="2.2" fill="#b877d9"/>
<circle cx="810.66" cy="200.14" r="2.2" fill="#b877d9"/>
<circle cx="815.33" cy="209.44" r="2.2" fill="#b877d9"/>
<circle cx="820" cy="211.11" r="2.2" fill="#b877d9"/>
<circle cx="824.66" cy="204.17" r="2.2" fill="#b877d9"/>
<circle cx="829.33" cy="210.42" r="2.2" fill="#b877d9"/>
<circle cx="834" cy="215.97" r="2.2" fill="#b877d9"/>
<circle cx="838.67" cy="220.14" r="2.2" fill="#b877d9"/>
<circle cx="843.34" cy="225.28" r="2.2" fill="#b877d9"/>
<circle cx="848.01" cy="217.36" r="2.2" fill="#b877d9"/>
<circle cx="852.68" cy="210.14" r="2.2" fill="#b877d9"/>
<circle cx="857.35" cy="212.92" r="2.2" fill="#b877d9"/>
<circle cx="862.02" cy="206.94" r="2.2" fill="#b877d9"/>
<circle cx="866.69" cy="210.83" r="2.2" fill="#b877d9"/>
<circle cx="871.36" cy="221.94" r="2.2" fill="#b877d9"/>
<circle cx="876.03" cy="217.78" r="2.2" fill="#b877d9"/>
<circle cx="880.7" cy="208.06" r="2.2" fill="#b877d9"/>
<circle cx="885.37" cy="206.25" r="2.2" fill="#b877d9"/>
<circle cx="890.04" cy="221.53" r="2.2" fill="#b877d9"/>
<circle cx="894.71" cy="223.33" r="2.2" fill="#b877d9"/>
<circle cx="899.38" cy="215.56" r="2.2" fill="#b877d9"/>
<circle cx="904.05" cy="220.83" r="2.2" fill="#b877d9"/>
<circle cx="908.72" cy="228.19" r="2.2" fill="#b877d9"/>
<circle cx="913.39" cy="231.11" r="2.2" fill="#b877d9"/>
<circle cx="918.05" cy="228.06" r="2.2" fill="#b877d9"/>
<circle cx="922.72" cy="220.56" r="2.2" fill="#b877d9"/>
<circle cx="927.39" cy="221.94" r="2.2" fill="#b877d9"/>
<circle cx="932.06" cy="228.89" r="2.2" fill="#b877d9"/>
<circle cx="936.73" cy="215.28" r="2.2" fill="#b877d9"/>
<circle cx="941.4" cy="199.72" r="2.2" fill="#b877d9"/>
<circle cx="946.07" cy="204.44" r="2.2" fill="#b877d9"/>
<circle cx="950.74" cy="204.58" r="2.2" fill="#b877d9"/>
<circle cx="955.41" cy="196.11" r="2.2" fill="#b877d9"/>
<circle cx="960.08" cy="191.39" r="2.2" fill="#b877d9"/>
<circle cx="964.75" cy="191.25" r="2.2" fill="#b877d9"/>
<circle cx="969.42" cy="196.94" r="2.2" fill="#b877d9"/>
<circle cx="974.09" cy="201.67" r="2.2" fill="#b877d9"/>
<circle cx="978.76" cy="195.83" r="2.2" fill="#b877d9"/>
<circle cx="983.43" cy="195.83" r="2.2" fill="#b877d9"/>
<circle cx="988.1" cy="198.19" r="2.2" fill="#b877d9"/>
<circle cx="992.77" cy="185.83" r="2.2" fill="#b877d9"/>
<circle cx="997.44" cy="195.83" r="2.2" fill="#b877d9"/>
<circle cx="1002.11" cy="215.56" r="2.2" fill="#b877d9"/>
<circle cx="1006.78" cy="217.78" r="2.2" fill="#b877d9"/>
<circle cx="1011.44" cy="209.72" r="2.2" fill="#b877d9"/>
<circle cx="1016.11" cy="208.75" r="2.2" fill="#b877d9"/>
<circle cx="1020.78" cy="211.39" r="2.2" fill="#b877d9"/>
<circle cx="1025.45" cy="209.72" r="2.2" fill="#b877d9"/>
<circle cx="1030.12" cy="206.94" r="2.2" fill="#b877d9"/>
<circle cx="1034.79" cy="200.42" r="2.2" fill="#b877d9"/>
<circle cx="1039.46" cy="203.89" r="2.2" fill="#b877d9"/>
<circle cx="1044.13" cy="212.78" r="2.2" fill="#b877d9"/>
<circle cx="1048.8" cy="215.28" r="2.2" fill="#b877d9"/>
<circle cx="1053.47" cy="206.25" r="2.2" fill="#b877d9"/>
<circle cx="1058.14" cy="209.03" r="2.2" fill="#b877d9"/>
<circle cx="1062.81" cy="215" r="2.2" fill="#b877d9"/>
<circle cx="1067.48" cy="208.61" r="2.2" fill="#b877d9"/>
<circle cx="1072.15" cy="206.25" r="2.2" fill="#b877d9"/>
<circle cx="1076.82" cy="212.5" r="2.2" fill="#b877d9"/>
<circle cx="1081.49" cy="213.89" r="2.2" fill="#b877d9"/>
<circle cx="1086.16" cy="213.89" r="2.2" fill="#b877d9"/>
<circle cx="1090.83" cy="211.81" r="2.2" fill="#b877d9"/>
<circle cx="1095.5" cy="209.72" r="2.2" fill="#b877d9"/>
<circle cx="1100.17" cy="213.89" r="2.2" fill="#b877d9"/>
<circle cx="1104.83" cy="203.47" r="2.2" fill="#b877d9"/>
<circle cx="1109.5" cy="201.39" r="2.2" fill="#b877d9"/>
<circle cx="1114.17" cy="208.61" r="2.2" fill="#b877d9"/>
<circle cx="1118.84" cy="197.92" r="2.2" fill="#b877d9"/>
<circle cx="1123.51" cy="195.14" r="2.2" fill="#b877d9"/>
<circle cx="1128.18" cy="204.58" r="2.2" fill="#b877d9"/>
<circle cx="1132.85" cy="204.58" r="2.2" fill="#b877d9"/>
<circle cx="1137.52" cy="203.47" r="2.2" fill="#b877d9"/>
<circle cx="1142.19" cy="205.28" r="2.2" fill="#b877d9"/>
<circle cx="1146.86" cy="209.03" r="2.2" fill="#b877d9"/>
<circle cx="1151.53" cy="214.17" r="2.2" fill="#b877d9"/>
<circle cx="1156.2" cy="214.17" r="2.2" fill="#b877d9"/>
<circle cx="1160.87" cy="210" r="2.2" fill="#b877d9"/>
<circle cx="1165.54" cy="203.47" r="2.2" fill="#b877d9"/>
<circle cx="1170.21" cy="202.78" r="2.2" fill="#b877d9"/>
<circle cx="1174.88" cy="208.61" r="2.2" fill="#b877d9"/>
<circle cx="1179.55" cy="212.92" r="2.2" fill="#b877d9"/>
<circle cx="1184.22" cy="215.28" r="2.2" fill="#b877d9"/>
<circle cx="1188.89" cy="212.78" r="2.2" fill="#b877d9"/>
<circle cx="1193.56" cy="210" r="2.2" fill="#b877d9"/>
<circle cx="1198.22" cy="219.72" r="2.2" fill="#b877d9"/>
<circle cx="1202.89" cy="224.72" r="2.2" fill="#b877d9"/>
<circle cx="1207.56" cy="214.17" r="2.2" fill="#b877d9"/>
<circle cx="1212.23" cy="205.56" r="2.2" fill="#b877d9"/>
<circle cx="1216.9" cy="214.86" r="2.2" fill="#b877d9"/>
<circle cx="1221.57" cy="214.58" r="2.2" fill="#b877d9"/>
<circle cx="1226.24" cy="197.92" r="2.2" fill="#b877d9"/>
<circle cx="1230.91" cy="199.58" r="2.2" fill="#b877d9"/>
<circle cx="1235.58" cy="205.97" r="2.2" fill="#b877d9"/>
<circle cx="1240.25" cy="214.58" r="2.2" fill="#b877d9"/>
<circle cx="684.58" cy="281.94" r="2.2" fill="#5794f2"/>
<circle cx="689.25" cy="277.08" r="2.2" fill="#5794f2"/>
<circle cx="693.92" cy="282.22" r="2.2" fill="#5794f2"/>
<circle cx="698.59" cy="286.11" r="2.2" fill="#5794f2"/>
<circle cx="703.26" cy="285.69" r="2.2" fill="#5794f2"/>
<circle cx="707.93" cy="281.94" r="2.2" fill="#5794f2"/>
<circle cx="712.6" cy="281.67" r="2.2" fill="#5794f2"/>
<circle cx="717.27" cy="289.31" r="2.2" fill="#5794f2"/>
<circle cx="721.94" cy="291.67" r="2.2" fill="#5794f2"/>
<circle cx="726.61" cy="290.56" r="2.2" fill="#5794f2"/>
<circle cx="731.27" cy="280.56" r="2.2" fill="#5794f2"/>
<circle cx="735.94" cy="277.78" r="2.2" fill="#5794f2"/>
<circle cx="740.61" cy="282.64" r="2.2" fill="#5794f2"/>
<circle cx="745.28" cy="289.17" r="2.2" fill="#5794f2"/>
<circle cx="749.95" cy="289.58" r="2.2" fill="#5794f2"/>
<circle cx="754.62" cy="290" r="2.2" fill="#5794f2"/>
<circle cx="759.29" cy="290.56" r="2.2" fill="#5794f2"/>
<circle cx="763.96" cy="292.64" r="2.2" fill="#5794f2"/>
<circle cx="768.63" cy="291.67" r="2.2" fill="#5794f2"/>
<circle cx="773.3" cy="285.69" r="2.2" fill="#5794f2"/>
<circle cx="777.97" cy="285.69" r="2.2" fill="#5794f2"/>
<circle cx="782.64" cy="287.22" r="2.2" fill="#5794f2"/>
<circle cx="787.31" cy="282.22" r="2.2" fill="#5794f2"/>
<circle cx="791.98" cy="279.17" r="2.2" fill="#5794f2"/>
<circle cx="796.65" cy="283.33" r="2.2" fill="#5794f2"/>
<circle cx="801.32" cy="283.61" r="2.2" fill="#5794f2"/>
<circle cx="805.99" cy="277.78" r="2.2" fill="#5794f2"/>
<circle cx="810.66" cy="277.08" r="2.2" fill="#5794f2"/>
<circle cx="815.33" cy="285.42" r="2.2" fill="#5794f2"/>
<circle cx="820" cy="286.39" r="2.2" fill="#5794f2"/>
<circle cx="824.66" cy="282.36" r="2.2" fill="#5794f2"/>
<circle cx="829.33" cy="285.69" r="2.2" fill="#5794f2"/>
<circle cx="834" cy="290" r="2.2" fill="#5794f2"/>
<circle cx="838.67" cy="292.36" r="2.2" fill="#5794f2"/>
<circle cx="843.34" cy="293.06" r="2.2" fill="#5794f2"/>
<circle cx="848.01" cy="291.94" r="2.2" fill="#5794f2"/>
<circle cx="852.68" cy="287.78" r="2.2" fill="#5794f2"/>
<circle cx="857.35" cy="284.72" r="2.2" fill="#5794f2"/>
<circle cx="862.02" cy="283.06" r="2.2" fill="#5794f2"/>
<circle cx="866.69" cy="290.28" r="2.2" fill="#5794f2"/>
<circle cx="871.36" cy="297.92" r="2.2" fill="#5794f2"/>
<circle cx="876.03" cy="292.64" r="2.2" fill="#5794f2"/>
<circle cx="880.7" cy="281.67" r="2.2" fill="#5794f2"/>
<circle cx="885.37" cy="285" r="2.2" fill="#5794f2"/>
<circle cx="890.04" cy="293.47" r="2.2" fill="#5794f2"/>
<circle cx="894.71" cy="294.17" r="2.2" fill="#5794f2"/>
<circle cx="899.38" cy="298.61" r="2.2" fill="#5794f2"/>
<circle cx="904.05" cy="307.64" r="2.2" fill="#5794f2"/>
<circle cx="908.72" cy="310" r="2.2" fill="#5794f2"/>
<circle cx="913.39" cy="305.28" r="2.2" fill="#5794f2"/>
<circle cx="918.05" cy="298.89" r="2.2" fill="#5794f2"/>
<circle cx="922.72" cy="297.92" r="2.2" fill="#5794f2"/>
<circle cx="927.39" cy="303.75" r="2.2" fill="#5794f2"/>
<circle cx="932.06" cy="302.5" r="2.2" fill="#5794f2"/>
<circle cx="936.73" cy="289.17" r="2.2" fill="#5794f2"/>
<circle cx="941.4" cy="279.58" r="2.2" fill="#5794f2"/>
<circle cx="946.07" cy="278.47" r="2.2" fill="#5794f2"/>
<circle cx="950.74" cy="274.72" r="2.2" fill="#5794f2"/>
<circle cx="955.41" cy="272.22" r="2.2" fill="#5794f2"/>
<circle cx="960.08" cy="272.92" r="2.2" fill="#5794f2"/>
<circle cx="964.75" cy="270.14" r="2.2" fill="#5794f2"/>
<circle cx="969.42" cy="271.53" r="2.2" fill="#5794f2"/>
<circle cx="974.09" cy="278.47" r="2.2" fill="#5794f2"/>
<circle cx="978.76" cy="276.81" r="2.2" fill="#5794f2"/>
<circle cx="983.43" cy="274.72" r="2.2" fill="#5794f2"/>
<circle cx="988.1" cy="271.53" r="2.2" fill="#5794f2"/>
<circle cx="992.77" cy="265.69" r="2.2" fill="#5794f2"/>
<circle cx="997.44" cy="274.72" r="2.2" fill="#5794f2"/>
<circle cx="1002.11" cy="283.61" r="2.2" fill="#5794f2"/>
<circle cx="1006.78" cy="287.22" r="2.2" fill="#5794f2"/>
<circle cx="1011.44" cy="286.11" r="2.2" fill="#5794f2"/>
<circle cx="1016.11" cy="283.61" r="2.2" fill="#5794f2"/>
<circle cx="1020.78" cy="282.22" r="2.2" fill="#5794f2"/>
<circle cx="1025.45" cy="281.67" r="2.2" fill="#5794f2"/>
<circle cx="1030.12" cy="282.22" r="2.2" fill="#5794f2"/>
<circle cx="1034.79" cy="281.25" r="2.2" fill="#5794f2"/>
<circle cx="1039.46" cy="288.61" r="2.2" fill="#5794f2"/>
<circle cx="1044.13" cy="294.03" r="2.2" fill="#5794f2"/>
<circle cx="1048.8" cy="290.56" r="2.2" fill="#5794f2"/>
<circle cx="1053.47" cy="284.03" r="2.2" fill="#5794f2"/>
<circle cx="1058.14" cy="285.42" r="2.2" fill="#5794f2"/>
<circle cx="1062.81" cy="291.25" r="2.2" fill="#5794f2"/>
<circle cx="1067.48" cy="287.22" r="2.2" fill="#5794f2"/>
<circle cx="1072.15" cy="284.44" r="2.2" fill="#5794f2"/>
<circle cx="1076.82" cy="285.83" r="2.2" fill="#5794f2"/>
<circle cx="1081.49" cy="288.19" r="2.2" fill="#5794f2"/>
<circle cx="1086.16" cy="289.86" r="2.2" fill="#5794f2"/>
<circle cx="1090.83" cy="290.97" r="2.2" fill="#5794f2"/>
<circle cx="1095.5" cy="286.53" r="2.2" fill="#5794f2"/>
<circle cx="1100.17" cy="285.42" r="2.2" fill="#5794f2"/>
<circle cx="1104.83" cy="285.69" r="2.2" fill="#5794f2"/>
<circle cx="1109.5" cy="284.03" r="2.2" fill="#5794f2"/>
<circle cx="1114.17" cy="289.58" r="2.2" fill="#5794f2"/>
<circle cx="1118.84" cy="281.94" r="2.2" fill="#5794f2"/>
<circle cx="1123.51" cy="276.39" r="2.2" fill="#5794f2"/>
<circle cx="1128.18" cy="281.25" r="2.2" fill="#5794f2"/>
<circle cx="1132.85" cy="281.25" r="2.2" fill="#5794f2"/>
<circle cx="1137.52" cy="285.14" r="2.2" fill="#5794f2"/>
<circle cx="1142.19" cy="283.06" r="2.2" fill="#5794f2"/>
<circle cx="1146.86" cy="284.72" r="2.2" fill="#5794f2"/>
<circle cx="1151.53" cy="292.08" r="2.2" fill="#5794f2"/>
<circle cx="1156.2" cy="291.67" r="2.2" fill="#5794f2"/>
<circle cx="1160.87" cy="286.11" r="2.2" fill="#5794f2"/>
<circle cx="1165.54" cy="283.61" r="2.2" fill="#5794f2"/>
<circle cx="1170.21" cy="284.03" r="2.2" fill="#5794f2"/>
<circle cx="1174.88" cy="285.83" r="2.2" fill="#5794f2"/>
<circle cx="1179.55" cy="290.56" r="2.2" fill="#5794f2"/>
<circle cx="1184.22" cy="289.17" r="2.2" fill="#5794f2"/>
<circle cx="1188.89" cy="286.39" r="2.2" fill="#5794f2"/>
<circle cx="1193.56" cy="287.22" r="2.2" fill="#5794f2"/>
<circle cx="1198.22" cy="290.56" r="2.2" fill="#5794f2"/>
<circle cx="1202.89" cy="292.78" r="2.2" fill="#5794f2"/>
<circle cx="1207.56" cy="289.58" r="2.2" fill="#5794f2"/>
<circle cx="1212.23" cy="286.39" r="2.2" fill="#5794f2"/>
<circle cx="1216.9" cy="290.56" r="2.2" fill="#5794f2"/>
<circle cx="1221.57" cy="290.97" r="2.2" fill="#5794f2"/>
<circle cx="1226.24" cy="285.42" r="2.2" fill="#5794f2"/>
<circle cx="1230.91" cy="283.61" r="2.2" fill="#5794f2"/>
<circle cx="1235.58" cy="287.5" r="2.2" fill="#5794f2"/>
<circle cx="1240.25" cy="293.33" r="2.2" fill="#5794f2"/>
<rect x="669" y="383.2" width="16" height="4.6" rx="2.3" fill="#5794f2"/>
<text x="701" y="390" font-size="14.5" fill="#ccccdc" stroke="#ccccdc" stroke-width="0.2" >logins</text>
<rect x="759" y="383.2" width="16" height="4.6" rx="2.3" fill="#b877d9"/>
<text x="791" y="390" font-size="14.5" fill="#ccccdc" stroke="#ccccdc" stroke-width="0.2" textLength="100.5" lengthAdjust="spacingAndGlyphs" >logins (-1 hour)</text>
<rect x="1282.5" y="110.5" width="307" height="165" rx="2" fill="#181b1f" stroke="rgba(204,204,220,0.09)" stroke-width="1"/>
<text x="1292.8" y="135.6" font-size="17" fill="#ccccdc" stroke="#ccccdc" stroke-width="0.45" textLength="64.8" lengthAdjust="spacingAndGlyphs" >Memory</text>
<path d="M 1370.28 258.35 A 69.1 69.1 0 1 1 1501.72 258.35 L 1483.84 252.54 A 50.3 50.3 0 1 0 1388.16 252.54 Z" fill="#25262b"/>
<path d="M 1370.28 258.35 A 69.1 69.1 0 0 1 1406.5 174.51 L 1414.53 191.51 A 50.3 50.3 0 0 0 1388.16 252.54 Z" fill="#64a052"/>
<path d="M 1365.43 259.93 A 74.2 74.2 0 0 1 1479.24 176.7 L 1477.43 179.22 A 71.10000000000001 71.10000000000001 0 0 0 1368.38 258.97 Z" fill="#6aae5b"/>
<path d="M 1479.24 176.7 A 74.2 74.2 0 0 1 1510.05 232.34 L 1506.96 232.54 A 71.10000000000001 71.10000000000001 0 0 0 1477.43 179.22 Z" fill="#ef8b2c"/>
<path d="M 1510.05 232.34 A 74.2 74.2 0 0 1 1506.57 259.93 L 1503.62 258.97 A 71.10000000000001 71.10000000000001 0 0 0 1506.96 232.54 Z" fill="#f03a2e"/>
<text x="1436" y="253.4" font-size="27" fill="#64a052" text-anchor="middle" stroke="#64a052" stroke-width="1.0" textLength="63.4" lengthAdjust="spacingAndGlyphs" >114 B</text>
<rect x="1599.5" y="110.5" width="308" height="165" rx="2" fill="#181b1f" stroke="rgba(204,204,220,0.09)" stroke-width="1"/>
<text x="1609.8" y="135.6" font-size="17" fill="#ccccdc" stroke="#ccccdc" stroke-width="0.45" textLength="89.6" lengthAdjust="spacingAndGlyphs" >Google hits</text>
<path d="M 1691.02 253.63 A 65.8 65.8 0 1 1 1816.18 253.63 L 1798.78 247.98 A 47.5 47.5 0 1 0 1708.42 247.98 Z" fill="#25262b"/>
<path d="M 1691.02 253.63 A 65.8 65.8 0 0 1 1693.15 207.32 L 1709.96 214.55 A 47.5 47.5 0 0 0 1708.42 247.98 Z" fill="#64a052"/>
<path d="M 1686.27 255.18 A 70.8 70.8 0 0 1 1794.42 175.45 L 1792.63 177.98 A 67.7 67.7 0 0 0 1689.21 254.22 Z" fill="#6aae5b"/>
<path d="M 1794.42 175.45 A 70.8 70.8 0 0 1 1824.24 228.59 L 1821.15 228.79 A 67.7 67.7 0 0 0 1792.63 177.98 Z" fill="#ef8b2c"/>
<path d="M 1824.24 228.59 A 70.8 70.8 0 0 1 1820.93 255.18 L 1817.99 254.22 A 67.7 67.7 0 0 0 1821.15 228.79 Z" fill="#f03a2e"/>
<text x="1752.9" y="253.9" font-size="34.5" fill="#64a052" text-anchor="middle" stroke="#64a052" stroke-width="1.2" textLength="53.3" lengthAdjust="spacingAndGlyphs" >57.1</text>
<rect x="1282.5" y="285.5" width="307" height="121" rx="2" fill="#181b1f" stroke="rgba(204,204,220,0.09)" stroke-width="1"/>
<text x="1292.8" y="310.4" font-size="17" fill="#ccccdc" stroke="#ccccdc" stroke-width="0.45" textLength="104" lengthAdjust="spacingAndGlyphs" >Support calls</text>
<polygon points="1284.17,405.8 1284.17,378.5 1287.5,379.58 1290.83,377.33 1297.92,384.17 1301.25,381.25 1304.58,365 1307.92,383.33 1311.25,377.5 1315,379.17 1318.33,383.33 1321.67,378.75 1325,382.08 1328.33,374.17 1335,385.42 1338.33,378.33 1341.67,383.75 1345.42,372.92 1352.08,389.17 1358.75,377.5 1365.83,390.42 1372.5,379.17 1375.83,387.08 1379.17,389.58 1382.5,381.25 1385.83,380.42 1390,375.42 1393.33,375.83 1396.67,379.17 1404.17,376.46 1406.25,377.5 1409.9,384.27 1413.54,375.94 1416.67,382.19 1419.79,384.27 1423.44,376.98 1427.08,382.19 1430.73,374.9 1436.46,374.9 1443.75,380.1 1451.04,374.38 1454.17,374.38 1457.29,381.67 1460.42,373.33 1461.98,371.25 1464.58,374.38 1470.83,380.62 1474.48,376.46 1477.6,380.1 1481.77,388.44 1484.9,384.27 1488.02,394.69 1494.79,378.54 1498.44,387.4 1505.21,383.23 1511.98,405.1 1515.1,399.38 1518.23,365 1522.4,369.69 1526.04,369.69 1529.17,378.02 1532.29,371.25 1535.94,384.27 1539.06,374.9 1542.19,384.27 1545.83,379.06 1548.96,383.23 1555.21,384.27 1559.38,380.1 1562.5,384.27 1566.15,386.35 1569.79,377.5 1572.92,391.04 1576.04,391.04 1580.21,381.15 1583.33,382.71 1586.98,385.31 1586.98,405.8" fill="#4a2226"/>
<polyline points="1284.17,378.5 1287.5,379.58 1290.83,377.33 1297.92,384.17 1301.25,381.25 1304.58,365 1307.92,383.33 1311.25,377.5 1315,379.17 1318.33,383.33 1321.67,378.75 1325,382.08 1328.33,374.17 1335,385.42 1338.33,378.33 1341.67,383.75 1345.42,372.92 1352.08,389.17 1358.75,377.5 1365.83,390.42 1372.5,379.17 1375.83,387.08 1379.17,389.58 1382.5,381.25 1385.83,380.42 1390,375.42 1393.33,375.83 1396.67,379.17 1404.17,376.46 1406.25,377.5 1409.9,384.27 1413.54,375.94 1416.67,382.19 1419.79,384.27 1423.44,376.98 1427.08,382.19 1430.73,374.9 1436.46,374.9 1443.75,380.1 1451.04,374.38 1454.17,374.38 1457.29,381.67 1460.42,373.33 1461.98,371.25 1464.58,374.38 1470.83,380.62 1474.48,376.46 1477.6,380.1 1481.77,388.44 1484.9,384.27 1488.02,394.69 1494.79,378.54 1498.44,387.4 1505.21,383.23 1511.98,405.1 1515.1,399.38 1518.23,365 1522.4,369.69 1526.04,369.69 1529.17,378.02 1532.29,371.25 1535.94,384.27 1539.06,374.9 1542.19,384.27 1545.83,379.06 1548.96,383.23 1555.21,384.27 1559.38,380.1 1562.5,384.27 1566.15,386.35 1569.79,377.5 1572.92,391.04 1576.04,391.04 1580.21,381.15 1583.33,382.71 1586.98,385.31" fill="none" stroke="#e5383b" stroke-width="1.5" stroke-linejoin="round"/>
<text x="1436" y="374.4" font-size="28" fill="#e5383b" text-anchor="middle" stroke="#e5383b" stroke-width="0.9" textLength="56.2" lengthAdjust="spacingAndGlyphs" >84.9</text>
<rect x="1599.5" y="285.5" width="308" height="121" rx="2" fill="#181b1f" stroke="rgba(204,204,220,0.09)" stroke-width="1"/>
<text x="1609.8" y="310.4" font-size="17" fill="#ccccdc" stroke="#ccccdc" stroke-width="0.45" textLength="68.1" lengthAdjust="spacingAndGlyphs" >Sign ups</text>
<polygon points="1601.83,405.8 1601.83,390.42 1608.5,381.67 1615.58,387.08 1622.25,376.25 1625.58,380.42 1632.25,376.67 1635.58,385 1638.92,382.08 1642.67,395 1645.58,384.17 1649.33,381.25 1652.67,388.75 1656,385.42 1659.33,382.08 1662.67,375.83 1666,387.08 1669.33,387.08 1673.08,387.92 1676.42,382.92 1680.17,386.67 1683.08,387.5 1686.42,392.5 1690.17,380 1693.5,392.08 1696.83,388.33 1700.17,381.25 1703.5,376.67 1707.25,373.33 1710.58,385 1713.92,377.5 1717.25,383.75 1720.58,378.33 1724.33,382.5 1727.25,390 1734.33,382.08 1737.25,386.25 1741,382.5 1744.33,385 1748.5,383.33 1757.5,380.67 1761.25,385.42 1764.58,382.92 1768.33,374.17 1771.67,381.67 1775,383.75 1778.33,379.17 1782.5,382.92 1785.42,383.33 1788.75,385.42 1792.08,379.58 1795.42,382.08 1798.75,389.17 1802.08,383.75 1805.83,392.5 1812.08,391.67 1815.83,381.25 1818.75,388.33 1822.5,387.92 1826.25,405.42 1829.58,400 1832.5,401.67 1836.25,373.33 1839.58,364.58 1842.92,368.75 1846.67,376.25 1850,373.33 1853.33,390.42 1856.67,385 1861.67,387.5 1863.33,387.5 1867.08,383.33 1873.33,388.75 1876.67,390.42 1880,384.17 1883.33,385.42 1887.08,380 1890.83,392.92 1894.17,386.67 1897.5,385.42 1900.83,389.58 1904.17,383.75 1904.17,405.8" fill="#213826"/>
<polyline points="1601.83,390.42 1608.5,381.67 1615.58,387.08 1622.25,376.25 1625.58,380.42 1632.25,376.67 1635.58,385 1638.92,382.08 1642.67,395 1645.58,384.17 1649.33,381.25 1652.67,388.75 1656,385.42 1659.33,382.08 1662.67,375.83 1666,387.08 1669.33,387.08 1673.08,387.92 1676.42,382.92 1680.17,386.67 1683.08,387.5 1686.42,392.5 1690.17,380 1693.5,392.08 1696.83,388.33 1700.17,381.25 1703.5,376.67 1707.25,373.33 1710.58,385 1713.92,377.5 1717.25,383.75 1720.58,378.33 1724.33,382.5 1727.25,390 1734.33,382.08 1737.25,386.25 1741,382.5 1744.33,385 1748.5,383.33 1757.5,380.67 1761.25,385.42 1764.58,382.92 1768.33,374.17 1771.67,381.67 1775,383.75 1778.33,379.17 1782.5,382.92 1785.42,383.33 1788.75,385.42 1792.08,379.58 1795.42,382.08 1798.75,389.17 1802.08,383.75 1805.83,392.5 1812.08,391.67 1815.83,381.25 1818.75,388.33 1822.5,387.92 1826.25,405.42 1829.58,400 1832.5,401.67 1836.25,373.33 1839.58,364.58 1842.92,368.75 1846.67,376.25 1850,373.33 1853.33,390.42 1856.67,385 1861.67,387.5 1863.33,387.5 1867.08,383.33 1873.33,388.75 1876.67,390.42 1880,384.17 1883.33,385.42 1887.08,380 1890.83,392.92 1894.17,386.67 1897.5,385.42 1900.83,389.58 1904.17,383.75" fill="none" stroke="#3cb43c" stroke-width="1.5" stroke-linejoin="round"/>
<text x="1753.4" y="374.2" font-size="28" fill="#3cb43c" text-anchor="middle" stroke="#3cb43c" stroke-width="0.9" textLength="48.2" lengthAdjust="spacingAndGlyphs" >283</text>
<rect x="12.5" y="416.5" width="1260" height="340" rx="2" fill="#181b1f" stroke="rgba(204,204,220,0.09)" stroke-width="1"/>
<text x="642.3" y="441.1" font-size="17" fill="#ccccdc" text-anchor="middle" stroke="#ccccdc" stroke-width="0.45" textLength="120" lengthAdjust="spacingAndGlyphs" >server requests</text>
<line x1="53.3" y1="687.7" x2="1243" y2="687.7" stroke="rgba(204,204,220,0.17)" stroke-width="1"/>
<text x="46.7" y="692.7" font-size="14.5" fill="#ccccdc" text-anchor="end" stroke="#ccccdc" stroke-width="0.2" >0</text>
<line x1="53.3" y1="616.8" x2="1243" y2="616.8" stroke="rgba(204,204,220,0.17)" stroke-width="1"/>
<text x="46.7" y="621.8" font-size="14.5" fill="#ccccdc" text-anchor="end" stroke="#ccccdc" stroke-width="0.2" >50</text>
<line x1="53.3" y1="545.9" x2="1243" y2="545.9" stroke="rgba(204,204,220,0.17)" stroke-width="1"/>
<text x="46.7" y="550.9" font-size="14.5" fill="#ccccdc" text-anchor="end" stroke="#ccccdc" stroke-width="0.2" >100</text>
<line x1="53.3" y1="475" x2="1243" y2="475" stroke="rgba(204,204,220,0.17)" stroke-width="1"/>
<text x="46.7" y="480" font-size="14.5" fill="#ccccdc" text-anchor="end" stroke="#ccccdc" stroke-width="0.2" >150</text>
<line x1="59" y1="475" x2="59" y2="687.7" stroke="rgba(204,204,220,0.17)" stroke-width="1"/>
<text x="59" y="710" font-size="14.5" fill="#ccccdc" text-anchor="middle" stroke="#ccccdc" stroke-width="0.2" textLength="34.28" lengthAdjust="spacingAndGlyphs" >16:50</text>
<line x1="157.94" y1="475" x2="157.94" y2="687.7" stroke="rgba(204,204,220,0.17)" stroke-width="1"/>
<text x="157.94" y="710" font-size="14.5" fill="#ccccdc" text-anchor="middle" stroke="#ccccdc" stroke-width="0.2" textLength="34.28" lengthAdjust="spacingAndGlyphs" >16:55</text>
<line x1="256.88" y1="475" x2="256.88" y2="687.7" stroke="rgba(204,204,220,0.17)" stroke-width="1"/>
<text x="256.88" y="710" font-size="14.5" fill="#ccccdc" text-anchor="middle" stroke="#ccccdc" stroke-width="0.2" textLength="34.28" lengthAdjust="spacingAndGlyphs" >17:00</text>
<line x1="355.82" y1="475" x2="355.82" y2="687.7" stroke="rgba(204,204,220,0.17)" stroke-width="1"/>
<text x="355.82" y="710" font-size="14.5" fill="#ccccdc" text-anchor="middle" stroke="#ccccdc" stroke-width="0.2" textLength="34.28" lengthAdjust="spacingAndGlyphs" >17:05</text>
<line x1="454.76" y1="475" x2="454.76" y2="687.7" stroke="rgba(204,204,220,0.17)" stroke-width="1"/>
<text x="454.76" y="710" font-size="14.5" fill="#ccccdc" text-anchor="middle" stroke="#ccccdc" stroke-width="0.2" textLength="32.28" lengthAdjust="spacingAndGlyphs" >17:10</text>
<line x1="553.7" y1="475" x2="553.7" y2="687.7" stroke="rgba(204,204,220,0.17)" stroke-width="1"/>
<text x="553.7" y="710" font-size="14.5" fill="#ccccdc" text-anchor="middle" stroke="#ccccdc" stroke-width="0.2" textLength="32.28" lengthAdjust="spacingAndGlyphs" >17:15</text>
<line x1="652.64" y1="475" x2="652.64" y2="687.7" stroke="rgba(204,204,220,0.17)" stroke-width="1"/>
<text x="652.64" y="710" font-size="14.5" fill="#ccccdc" text-anchor="middle" stroke="#ccccdc" stroke-width="0.2" textLength="34.28" lengthAdjust="spacingAndGlyphs" >17:20</text>
<line x1="751.58" y1="475" x2="751.58" y2="687.7" stroke="rgba(204,204,220,0.17)" stroke-width="1"/>
<text x="751.58" y="710" font-size="14.5" fill="#ccccdc" text-anchor="middle" stroke="#ccccdc" stroke-width="0.2" textLength="34.28" lengthAdjust="spacingAndGlyphs" >17:25</text>
<line x1="850.52" y1="475" x2="850.52" y2="687.7" stroke="rgba(204,204,220,0.17)" stroke-width="1"/>
<text x="850.52" y="710" font-size="14.5" fill="#ccccdc" text-anchor="middle" stroke="#ccccdc" stroke-width="0.2" textLength="34.28" lengthAdjust="spacingAndGlyphs" >17:30</text>
<line x1="949.46" y1="475" x2="949.46" y2="687.7" stroke="rgba(204,204,220,0.17)" stroke-width="1"/>
<text x="949.46" y="710" font-size="14.5" fill="#ccccdc" text-anchor="middle" stroke="#ccccdc" stroke-width="0.2" textLength="34.28" lengthAdjust="spacingAndGlyphs" >17:35</text>
<line x1="1048.4" y1="475" x2="1048.4" y2="687.7" stroke="rgba(204,204,220,0.17)" stroke-width="1"/>
<text x="1048.4" y="710" font-size="14.5" fill="#ccccdc" text-anchor="middle" stroke="#ccccdc" stroke-width="0.2" textLength="34.28" lengthAdjust="spacingAndGlyphs" >17:40</text>
<line x1="1147.34" y1="475" x2="1147.34" y2="687.7" stroke="rgba(204,204,220,0.17)" stroke-width="1"/>
<text x="1147.34" y="710" font-size="14.5" fill="#ccccdc" text-anchor="middle" stroke="#ccccdc" stroke-width="0.2" textLength="34.28" lengthAdjust="spacingAndGlyphs" >17:45</text>
<polygon points="55.2,687.7 55.2,532.71 58.49,528.49 61.78,524.26 65.07,522.9 68.36,522.36 71.66,518.71 74.95,514.65 78.24,518.58 81.53,522.26 84.82,521.93 88.11,521.42 91.4,520.11 94.69,517.85 97.98,513.46 101.28,520.27 104.57,535.75 107.86,530.87 111.15,525.89 114.44,528.4 117.73,531.65 121.02,529.46 124.31,527.67 127.6,529.25 130.9,529.6 134.19,528.83 137.48,529.42 140.77,530.84 144.06,529.66 147.35,524.77 150.64,521.42 153.93,524.43 157.22,527.44 160.52,525.35 163.81,523.64 167.1,527.4 170.39,531.16 173.68,530.04 176.97,528.16 180.26,527.5 183.55,527.19 186.84,522.58 190.14,523.64 193.43,526.11 196.72,527.32 200.01,525.1 203.3,522.88 206.59,514.21 209.88,503.24 213.17,512.94 216.46,526.66 219.76,523.79 223.05,519.84 226.34,518.37 229.63,520.51 232.92,522.65 236.21,523.68 239.5,524.56 242.79,525.37 246.08,523.54 249.38,521.71 252.67,521.12 255.96,526.3 259.25,531.47 262.54,526.24 265.83,520.6 269.12,520.39 272.41,522.04 275.7,524.21 279,528.33 282.29,528.99 285.58,529.46 288.87,531.59 292.16,534.33 295.45,530.48 298.74,525.31 302.03,525.37 305.32,528.66 308.62,527.48 311.91,524.56 315.2,521.63 318.49,524.52 321.78,528.28 325.07,528.51 328.36,526.86 331.65,525.24 334.94,523.83 338.24,522.42 341.53,527.27 344.82,532.66 348.11,526.07 351.4,524.78 354.69,525.33 357.98,522.09 361.27,518.14 364.56,517.58 367.86,519.05 371.15,520.51 374.44,523.74 377.73,527.47 381.02,529.07 384.31,530.39 387.6,531.74 390.89,533.13 394.18,534.53 397.48,532.49 400.77,529.67 404.06,528.74 407.35,529.07 410.64,528.4 413.93,527.3 417.22,527.2 420.51,527.35 423.8,527.49 427.1,524.81 430.39,521.99 433.68,526.45 436.97,533.5 440.26,535.16 443.55,531.87 446.84,529.79 450.13,530.44 453.42,531.1 456.72,531.96 460.01,534.03 463.3,536.1 466.59,529.55 469.88,522.31 473.17,521.61 476.46,524.59 479.75,533.2 483.04,535.94 486.34,538.84 489.63,542.03 492.92,538.08 496.21,534.65 499.5,531.91 502.79,527.34 506.08,521.15 509.37,523.69 512.66,526.7 515.96,525.57 519.25,522.94 522.54,522.77 525.83,523.82 529.12,521.59 532.41,519.37 535.7,519.3 538.99,520.07 542.28,519.88 545.58,520.94 548.87,523.76 552.16,523.34 555.45,524.94 558.74,524.87 562.03,522.67 565.32,520.48 568.61,520.75 571.9,522.73 575.2,522.81 578.49,522.06 581.78,523.55 585.07,523.36 588.36,519.45 591.65,519.86 594.94,524.56 598.23,524.19 601.52,521.93 604.82,521.21 608.11,521.94 611.4,522.67 614.69,526.48 617.98,531.84 621.27,533.81 624.56,531.61 627.85,529.6 631.14,527.73 634.44,527.68 637.73,528.44 641.02,526.98 644.31,525.52 647.6,525.34 650.89,527.65 654.18,524.36 657.47,522.4 660.76,522.68 664.06,523.06 667.35,523.98 670.64,521.54 673.93,519.24 677.22,522.86 680.51,524.55 683.8,523.45 687.09,523.48 690.38,524.57 693.68,521.38 696.97,518.52 700.26,521.1 703.55,519.12 706.84,519.51 710.13,521.11 713.42,518.7 716.71,518.97 720,524.67 723.3,525.29 726.59,520.14 729.88,519.73 733.17,519.32 736.46,520.48 739.75,522.55 743.04,524.44 746.33,526.08 749.62,527.73 752.92,525.29 756.21,522.33 759.5,522.57 762.79,522.85 766.08,519.57 769.37,515.89 772.66,515.06 775.95,514.24 779.24,515.04 782.54,514.58 785.83,514.24 789.12,518.19 792.41,521.83 795.7,524.39 798.99,526.95 802.28,526.95 805.57,522.72 808.86,519.31 812.16,520.21 815.45,521.11 818.74,522 822.03,521.9 825.32,521.32 828.61,521.38 831.9,523.72 835.19,520.43 838.48,520.24 841.78,527.07 845.07,526.72 848.36,526.37 851.65,526.02 854.94,525.67 858.23,523.91 861.52,518.65 864.81,518.25 868.1,525.59 871.4,531.95 874.69,533.59 877.98,532.82 881.27,525.58 884.56,518.84 887.85,520.98 891.14,528.22 894.43,534.08 897.72,536.82 901.02,534.19 904.31,531.56 907.6,529.09 910.89,526.62 914.18,528.1 917.47,532.08 920.76,532.08 924.05,531.82 927.34,531.05 930.64,529.89 933.93,527.95 937.22,524.66 940.51,523.96 943.8,529.88 947.09,528.71 950.38,524.48 953.67,524.48 956.96,529 960.26,533.53 963.55,533.23 966.84,532.52 970.13,528.9 973.42,526.84 976.71,533.42 980,537.62 983.29,534.83 986.58,526.6 989.88,525.02 993.17,533.3 996.46,541.72 999.75,550.77 1003.04,559.82 1006.33,561.47 1009.62,559.28 1012.91,555.25 1016.2,551.34 1019.5,551.43 1022.79,554.06 1026.08,549.74 1029.37,537.67 1032.66,522.31 1035.95,506.95 1039.24,505.33 1042.53,506.2 1045.82,505.36 1049.12,504.42 1052.41,504.17 1055.7,504.17 1058.99,504.45 1062.28,505.84 1065.57,507.24 1068.86,508.15 1072.15,509.51 1075.44,518.44 1078.74,527.37 1082.03,522.61 1085.32,515.78 1088.61,512.84 1091.9,517.56 1095.19,522.17 1098.48,526.66 1101.77,531.15 1105.06,535.64 1108.36,535.79 1111.65,529.21 1114.94,527.7 1118.23,527.56 1121.52,525.32 1124.81,525.62 1128.1,527.78 1131.39,530.11 1134.68,532.75 1137.98,531.63 1141.27,529.43 1144.56,528.4 1147.85,527.52 1151.14,528.57 1154.43,529.3 1157.72,525.79 1161.01,522.28 1164.3,520.67 1167.6,525.37 1170.89,529.98 1174.18,528.67 1177.47,530.55 1180.76,532.43 1184.05,529.91 1187.34,527.92 1190.63,526.85 1193.92,526.13 1197.22,531.77 1200.51,537.42 1203.8,533.74 1207.09,528.25 1210.38,530.39 1213.67,533.02 1216.96,530.71 1220.25,527.48 1223.54,530.3 1226.84,533.12 1230.13,527.45 1233.42,521.31 1236.71,523.57 1240,525.83 1240,687.7" fill="#163254"/>
<polygon points="55.2,687.7 55.2,572.29 58.49,568.82 61.78,565.34 65.07,564.58 68.36,564.58 71.66,561.1 74.95,557.15 78.24,560.11 81.53,562.92 84.82,562.92 88.11,562.81 91.4,562.27 94.69,561.4 97.98,559.86 101.28,563.85 104.57,577.02 107.86,569.37 111.15,564.02 114.44,567.13 117.73,570.2 121.02,568.77 124.31,567.76 127.6,570.13 130.9,570.67 134.19,569.58 137.48,569.05 140.77,568.86 144.06,567.58 147.35,564.73 150.64,564.68 153.93,567.31 157.22,566.28 160.52,564.96 163.81,565.99 167.1,567.97 170.39,569.94 173.68,569.85 176.97,569.44 180.26,568.21 183.55,565.33 186.84,562.45 190.14,563.39 193.43,565.28 196.72,566.49 200.01,565.83 203.3,565.17 206.59,556.51 209.88,545 213.17,556.78 216.46,569.43 219.76,565.88 223.05,561.28 226.34,557.36 229.63,560.49 232.92,563.62 236.21,565.37 239.5,566.03 242.79,566.61 246.08,564.47 249.38,562.33 252.67,563.52 255.96,568.13 259.25,572.74 262.54,568.4 265.83,563.69 269.12,563.48 272.41,564.8 275.7,566.39 279,568.04 282.29,568.57 285.58,569.04 288.87,571.58 292.16,573.64 295.45,568.7 298.74,563.76 302.03,564.59 305.32,568.97 308.62,566.5 311.91,561.35 315.2,563.65 318.49,567.6 321.78,569.96 325.07,571.19 328.36,568.45 331.65,565.89 334.94,564.67 338.24,563.45 341.53,567 344.82,571.04 348.11,565.47 351.4,565.77 354.69,569.6 357.98,566.05 361.27,561.11 364.56,558.48 367.86,560.94 371.15,563.41 374.44,566.37 377.73,569.48 381.02,571.16 384.31,571.73 387.6,572.34 390.89,573.75 394.18,575.16 397.48,572.2 400.77,568.25 404.06,568.44 407.35,571.41 410.64,569.66 413.93,565.89 417.22,564.64 420.51,566.05 423.8,566.93 427.1,566.34 430.39,565.76 433.68,567.91 436.97,573.84 440.26,577.63 443.55,573.21 446.84,568.79 450.13,569.76 453.42,570.79 456.72,572.1 460.01,575.17 463.3,575.71 466.59,568.3 469.88,560.9 473.17,558.75 476.46,562.55 479.75,571.11 483.04,573.24 486.34,576.7 489.63,578.33 492.92,575.81 496.21,572.96 499.5,569.67 502.79,564.14 506.08,561.16 509.37,566.32 512.66,567.94 515.96,563.47 519.25,561.98 522.54,565.99 525.83,566.25 529.12,562.96 532.41,561.12 535.7,561.95 538.99,562.77 542.28,562.38 545.58,562.92 548.87,565.98 552.16,565.76 555.45,565.54 558.74,564.97 562.03,563.94 565.32,562.92 568.61,564.38 571.9,567.56 575.2,566.54 578.49,564.1 581.78,565.42 585.07,564.14 588.36,560.54 591.65,560.75 594.94,564.74 598.23,565.36 601.52,561.19 604.82,560.67 608.11,563.59 611.4,566.52 614.69,570.19 617.98,574.23 621.27,575.13 624.56,572.16 627.85,570.32 631.14,569.38 634.44,569.06 637.73,569.98 641.02,567.59 644.31,564.11 647.6,566.13 650.89,568.78 654.18,565.18 657.47,564.26 660.76,567.3 664.06,565.44 667.35,563.73 670.64,562.63 673.93,562.72 677.22,565.46 680.51,566.92 683.8,566.5 687.09,566.09 690.38,565.32 693.68,562.49 696.97,562.06 700.26,564.53 703.55,560.69 706.84,560.38 710.13,562.81 713.42,562.34 716.71,561.94 720,566.28 723.3,567.16 726.59,563.47 729.88,562.57 733.17,562.16 736.46,562.81 739.75,565.78 743.04,565.94 746.33,565.5 749.62,568.79 752.92,567.8 756.21,563.57 759.5,561.21 762.79,562.26 766.08,560.6 769.37,558.13 772.66,556.43 775.95,557.2 779.24,557.52 782.54,556.97 785.83,558.41 789.12,562.36 792.41,562.92 795.7,563.98 798.99,567.82 802.28,568.66 805.57,564.54 808.86,560.43 812.16,560.84 815.45,562.09 818.74,563.33 822.03,562.21 825.32,561.08 828.61,563.92 831.9,566.32 835.19,562.48 838.48,562.01 841.78,569.16 845.07,568.94 848.36,568.72 851.65,568.5 854.94,568.28 858.23,566.47 861.52,560.65 864.81,559.48 868.1,565.69 871.4,571.02 874.69,572.12 877.98,571.13 881.27,564.55 884.56,558.48 887.85,561.54 891.14,568.12 894.43,572.67 897.72,576.84 901.02,575.05 904.31,572.88 907.6,568.47 910.89,564.05 914.18,566.58 917.47,574.11 920.76,573.01 924.05,572.16 927.34,571.76 930.64,573.12 933.93,568.3 937.22,565.39 940.51,568.9 943.8,570.47 947.09,568.13 950.38,565.79 953.67,566.33 956.96,569.95 960.26,573.57 963.55,571.98 966.84,570.09 970.13,567.9 973.42,567.17 976.71,574.52 980,579.71 983.29,578.56 986.58,568.79 989.88,566.38 993.17,574.94 996.46,581.04 999.75,586.6 1003.04,592.17 1006.33,595.11 1009.62,593.01 1012.91,588.8 1016.2,585.47 1019.5,589.31 1022.79,589.22 1026.08,578.87 1029.37,568.69 1032.66,560.87 1035.95,553.05 1039.24,550.13 1042.53,551.56 1045.82,551.25 1049.12,550.02 1052.41,550.39 1055.7,550.77 1058.99,549.87 1062.28,550.62 1065.57,552.81 1068.86,554.86 1072.15,557.18 1075.44,563.21 1078.74,567.18 1082.03,562.06 1085.32,556.94 1088.61,554.65 1091.9,557.94 1095.19,561.95 1098.48,566.89 1101.77,571.83 1105.06,572.29 1108.36,571.14 1111.65,567.59 1114.94,568.32 1118.23,569.69 1121.52,566.4 1124.81,566.35 1128.1,568.7 1131.39,570.8 1134.68,572.45 1137.98,572.07 1141.27,569.33 1144.56,567.02 1147.85,565.04 1151.14,566.93 1154.43,566.95 1157.72,563.99 1161.01,563.59 1164.3,565.79 1167.6,567.98 1170.89,568.24 1174.18,567.75 1177.47,571.43 1180.76,572.01 1184.05,569.26 1187.34,566.39 1190.63,563.43 1193.92,567.65 1197.22,574.46 1200.51,575.28 1203.8,571.23 1207.09,568.13 1210.38,570.6 1213.67,573.07 1216.96,571.85 1220.25,569.21 1223.54,570.02 1226.84,571.55 1230.13,567.41 1233.42,562.98 1236.71,565.55 1240,568.12 1240,687.7" fill="#205382"/>
<polygon points="55.2,687.7 55.2,610.42 58.49,607.79 61.78,605.16 65.07,604.41 68.36,604.19 71.66,602.91 74.95,601.48 78.24,602.54 81.53,603.78 84.82,606.58 88.11,606.01 91.4,604.69 94.69,604.58 97.98,604.67 101.28,608.99 104.57,613.31 107.86,609.01 111.15,605.9 114.44,607.12 117.73,608.33 121.02,608 124.31,607.91 127.6,609.79 130.9,611.67 134.19,611.14 137.48,610.32 140.77,609.01 144.06,606.85 147.35,605.11 150.64,605.86 153.93,606.61 157.22,606.23 160.52,605.76 163.81,606.8 167.1,608.44 170.39,609.71 173.68,609.24 176.97,608.77 180.26,609.54 183.55,607.1 186.84,603.26 190.14,604.08 193.43,606.06 196.72,606.25 200.01,606.25 203.3,606.25 206.59,601.66 209.88,595.43 213.17,601.46 216.46,607.94 219.76,605.37 223.05,602.21 226.34,599.05 229.63,600.78 232.92,603.94 236.21,607.1 239.5,607.29 242.79,605.58 246.08,603.87 249.38,603.65 252.67,605.29 255.96,606.94 259.25,609.78 262.54,608.98 265.83,606.1 269.12,603.69 272.41,605.01 275.7,606.32 279,607.64 282.29,608.75 285.58,609.92 288.87,612.44 292.16,613.93 295.45,609.57 298.74,605.21 302.03,606.59 305.32,611.53 308.62,608.97 311.91,603.49 315.2,603.85 318.49,605.49 321.78,606.86 325.07,607.51 328.36,608.17 331.65,607.78 334.94,607.05 338.24,606.32 341.53,607.7 344.82,609.3 348.11,604.18 351.4,605.09 354.69,609.15 357.98,606.78 361.27,603.21 364.56,602.8 367.86,604.28 371.15,605.78 374.44,607.43 377.73,609.07 381.02,609.93 384.31,610.18 387.6,610.45 390.89,611.39 394.18,612.33 397.48,609.97 400.77,606.87 404.06,607.27 407.35,610.01 410.64,609.38 413.93,607.31 417.22,606.39 420.51,606.68 423.8,606.98 427.1,607.08 430.39,607.08 433.68,608.51 436.97,611.89 440.26,613.95 443.55,610.84 446.84,607.74 450.13,609.52 453.42,611.35 456.72,612.94 460.01,613.13 463.3,613.32 466.59,607.76 469.88,601.74 473.17,601.12 476.46,603.38 479.75,610.29 483.04,613.11 486.34,615.28 489.63,614.83 492.92,612.95 496.21,610.46 499.5,607.17 502.79,603.88 506.08,603.46 509.37,605.1 512.66,606.5 515.96,603.21 519.25,602.84 522.54,605.8 525.83,606.05 529.12,604.24 532.41,602.53 535.7,603.26 538.99,603.99 542.28,604.89 545.58,606.54 548.87,607.78 552.16,608.03 555.45,608.27 558.74,606.01 562.03,602.94 565.32,604.38 568.61,606.58 571.9,608.73 575.2,606.76 578.49,605.86 581.78,606.41 585.07,605.04 588.36,601.95 591.65,602.42 594.94,606.41 598.23,607.17 601.52,603.33 604.82,602.59 608.11,604.78 611.4,606.97 614.69,609.77 617.98,612.88 621.27,613.94 624.56,612.52 627.85,611.51 631.14,610.85 634.44,609.7 637.73,607.56 641.02,605.42 644.31,606.06 647.6,607.37 650.89,607.65 654.18,605.13 657.47,604.76 660.76,607.48 664.06,605.28 667.35,603.65 670.64,604.2 673.93,604.75 677.22,605.3 680.51,605.62 683.8,605.62 687.09,605.62 690.38,607.79 693.68,606.74 696.97,605.34 700.26,605.58 703.55,602.84 706.84,602.06 710.13,603.29 713.42,604.86 716.71,607.35 720,609.84 723.3,609.15 726.59,604.28 729.88,603.54 733.17,603.54 736.46,605.03 739.75,607.38 743.04,607.92 746.33,606.5 749.62,608.15 752.92,607.92 756.21,604.63 759.5,602.81 762.79,603.69 766.08,603.04 769.37,600.58 772.66,598.11 775.95,599.33 779.24,600.83 782.54,600.83 785.83,601.11 789.12,603.3 792.41,605.4 795.7,607.15 798.99,607.87 802.28,606.44 805.57,605.22 808.86,604.27 812.16,603.32 815.45,604.29 818.74,606.66 822.03,605.68 825.32,604.7 828.61,605.24 831.9,606.5 835.19,603.53 838.48,603.43 841.78,609.77 845.07,609.2 848.36,608.63 851.65,608.06 854.94,607.49 858.23,606.36 861.52,603.82 864.81,601.77 868.1,606.15 871.4,609.79 874.69,609.79 877.98,608.85 881.27,605.37 884.56,602.11 887.85,603.11 891.14,608.81 894.43,613.2 897.72,612.54 901.02,611.88 904.31,609.48 907.6,607.07 910.89,605.28 914.18,607.26 917.47,608.7 920.76,608.48 924.05,608.6 927.34,609.37 930.64,608.53 933.93,605.71 937.22,604.38 940.51,608 943.8,610.06 947.09,608.98 950.38,607.91 953.67,606.83 956.96,609 960.26,611.74 963.55,610.69 966.84,609.45 970.13,608.16 973.42,606.45 976.71,609.53 980,617.03 983.29,614.62 986.58,604.63 989.88,606.11 993.17,611.6 996.46,616.78 999.75,620.65 1003.04,624.53 1006.33,626.41 1009.62,624.44 1012.91,621.59 1016.2,617.64 1019.5,620.48 1022.79,621.64 1026.08,615.53 1029.37,609.49 1032.66,604.59 1035.95,599.69 1039.24,595.97 1042.53,596.63 1045.82,594.9 1049.12,593.18 1052.41,594.41 1055.7,595.63 1058.99,595.29 1062.28,594.63 1065.57,594.73 1068.86,596.61 1072.15,598.7 1075.44,603.09 1078.74,606.18 1082.03,603.55 1085.32,601.31 1088.61,599.41 1091.9,601.05 1095.19,603.05 1098.48,607.56 1101.77,612.07 1105.06,611.01 1108.36,609.36 1111.65,608.92 1114.94,610.5 1118.23,608.75 1121.52,606.92 1124.81,608.16 1128.1,609.39 1131.39,610.01 1134.68,610.34 1137.98,609.31 1141.27,607.88 1144.56,608 1147.85,608.33 1151.14,608.98 1154.43,606.51 1157.72,602.78 1161.01,602.35 1164.3,603.82 1167.6,606.24 1170.89,606.91 1174.18,606.89 1177.47,610.18 1180.76,610.65 1184.05,608.13 1187.34,606.75 1190.63,606.17 1193.92,605.95 1197.22,612.04 1200.51,610.74 1203.8,607.45 1207.09,608.72 1210.38,610.56 1213.67,612.41 1216.96,611.13 1220.25,608.66 1223.54,606.98 1226.84,608.63 1230.13,606.52 1233.42,604.24 1236.71,607.01 1240,609.79 1240,687.7" fill="#3d6187"/>
<polygon points="55.2,687.7 55.2,648.33 58.49,646.73 61.78,645.12 65.07,643.92 68.36,645.07 71.66,644.53 74.95,643.76 78.24,645.58 81.53,647.24 84.82,646.58 88.11,645.92 91.4,645.26 94.69,645.51 97.98,645.88 101.28,648.12 104.57,648.51 107.86,646.54 111.15,647.66 114.44,649.3 117.73,645.91 121.02,642.69 124.31,645.98 127.6,648.75 130.9,648.75 134.19,648.75 137.48,648.75 140.77,649.08 144.06,649.27 147.35,648.2 150.64,647.14 153.93,646.67 157.22,646.67 160.52,647.44 163.81,648.61 167.1,649.78 170.39,648.77 173.68,647.27 176.97,647.19 180.26,648.07 183.55,646.41 186.84,643.67 190.14,644.44 193.43,646.09 196.72,646.05 200.01,645.83 203.3,643.77 206.59,641.71 209.88,643.7 213.17,645.78 216.46,647.64 219.76,649.36 223.05,646.86 226.34,644.33 229.63,645.19 232.92,647.06 236.21,647.29 239.5,647.29 242.79,647.37 246.08,647.59 249.38,647.81 252.67,648.2 255.96,648.78 259.25,649.35 262.54,647.76 265.83,646.08 269.12,644.75 272.41,646.23 275.7,647.71 279,647.19 282.29,645.21 285.58,647.43 288.87,649.65 292.16,650.01 295.45,648.26 298.74,646.5 302.03,646.34 305.32,647.16 308.62,647.84 311.91,646.96 315.2,646.16 318.49,645.69 321.78,645.22 325.07,647.93 328.36,647.62 331.65,646.02 334.94,646.01 338.24,647.66 341.53,649.3 344.82,647.57 348.11,645.69 351.4,646.84 354.69,649.03 357.98,647.79 361.27,645.91 364.56,645.72 367.86,646.55 371.15,647.31 374.44,647.51 377.73,647.71 381.02,647.9 384.31,648.96 387.6,650.08 390.89,651.2 394.18,649.76 397.48,647.54 400.77,646.03 404.06,646.85 407.35,647.67 410.64,647.57 413.93,647.08 417.22,646.75 420.51,647.24 423.8,647.74 427.1,647.6 430.39,647.11 433.68,646.94 436.97,649.58 440.26,650 443.55,648.4 446.84,647.6 450.13,648.62 453.42,649.64 456.72,650.66 460.01,650.06 463.3,649.12 466.59,647.28 469.88,644.87 473.17,645.73 476.46,647.92 479.75,649.48 483.04,650.89 486.34,651.46 489.63,651.46 492.92,650.16 496.21,648.29 499.5,646.72 502.79,645.21 506.08,645.57 509.37,647.26 512.66,647.45 515.96,645.04 519.25,644.88 522.54,647.29 525.83,647.92 529.12,647.19 532.41,646.45 535.7,647.14 538.99,648.37 542.28,649.27 545.58,648.72 548.87,648.18 552.16,647.63 555.45,646.92 558.74,645.97 562.03,645.02 565.32,645.75 568.61,647.92 571.9,648.77 575.2,646.9 578.49,646.16 581.78,646.93 585.07,646.25 588.36,644.28 591.65,646.65 594.94,649.29 598.23,648.08 601.52,645.45 604.82,644.89 608.11,646.31 611.4,647.73 614.69,649.15 617.98,650.13 621.27,650.46 624.56,650.79 627.85,649.88 631.14,648.79 634.44,647.64 637.73,646.48 641.02,645.95 644.31,646.21 647.6,646.47 650.89,646.37 654.18,645.27 657.47,645.68 660.76,647.82 664.06,643.85 667.35,644.51 670.64,645.17 673.93,645.98 677.22,646.81 680.51,647.13 683.8,646.75 687.09,646.37 690.38,645.98 693.68,646.97 696.97,648.84 700.26,647.03 703.55,643.74 706.84,643.06 710.13,645.04 713.42,644.95 716.71,644.67 720,648.03 723.3,650.15 726.59,648.57 729.88,647.22 733.17,645.9 736.46,644.58 739.75,647.61 743.04,648.46 746.33,646.26 749.62,646.63 752.92,647.47 756.21,645.21 759.5,644.22 762.79,645.53 766.08,645.95 769.37,645.29 772.66,644.63 775.95,644.05 779.24,643.48 782.54,643.55 785.83,644.65 789.12,644.94 792.41,644.39 795.7,645.56 798.99,647.91 802.28,648.84 805.57,647.43 808.86,646.16 812.16,645.61 815.45,645.27 818.74,645.52 822.03,645.77 825.32,646.43 828.61,647.26 831.9,647.39 835.19,644.76 838.48,647.24 841.78,649.98 845.07,649.37 848.36,648.76 851.65,648.15 854.94,647.53 858.23,647.05 861.52,646.65 864.81,645.73 868.1,646.36 871.4,648.99 874.69,649.38 877.98,647.76 881.27,645.02 884.56,645.58 887.85,647.64 891.14,649.41 894.43,649.67 897.72,649.92 901.02,650.17 904.31,650.35 907.6,648.7 910.89,647.29 914.18,647.29 917.47,646.95 920.76,645.54 924.05,644.2 927.34,645.25 930.64,645.2 933.93,643.77 937.22,644.57 940.51,647.2 943.8,646.97 947.09,646.75 950.38,647.97 953.67,649.19 956.96,650.03 960.26,650.8 963.55,649.58 966.84,648.26 970.13,646.95 973.42,646.4 976.71,650.13 980,652.03 983.29,648.55 986.58,645.31 989.88,647.84 993.17,650.38 996.46,651.92 999.75,653.71 1003.04,657 1006.33,658.41 1009.62,656.19 1012.91,653.97 1016.2,654.53 1019.5,655.75 1022.79,653.52 1026.08,648.91 1029.37,644.51 1032.66,643.36 1035.95,642.21 1039.24,641.23 1042.53,640.41 1045.82,639.59 1049.12,641.46 1052.41,643.34 1055.7,642.79 1058.99,641.57 1062.28,639.77 1065.57,637.54 1068.86,640.88 1072.15,644.32 1075.44,647.19 1078.74,646.41 1082.03,645.63 1085.32,644.85 1088.61,644.77 1091.9,645.05 1095.19,646.29 1098.48,648.76 1101.77,651.23 1105.06,649.5 1108.36,647.34 1111.65,648.12 1114.94,649.84 1118.23,648.36 1121.52,646.88 1124.81,646.82 1128.1,647.81 1131.39,648.79 1134.68,648.9 1137.98,647.89 1141.27,647.69 1144.56,647.49 1147.85,647.3 1151.14,648.9 1154.43,646.56 1157.72,643.27 1161.01,644.37 1164.3,645.46 1167.6,646.25 1170.89,646.25 1174.18,646.43 1177.47,649.06 1180.76,649.62 1184.05,647.97 1187.34,646.33 1190.63,647.29 1193.92,648.39 1197.22,649.31 1200.51,648.65 1203.8,647.99 1207.09,648.7 1210.38,649.57 1213.67,650.37 1216.96,649.24 1220.25,648.12 1223.54,648.82 1226.84,649.92 1230.13,648.17 1233.42,646.3 1236.71,648.36 1240,650.42 1240,687.7" fill="#7a8e9b"/>
<polyline points="55.2,532.71 58.49,528.49 61.78,524.26 65.07,522.9 68.36,522.36 71.66,518.71 74.95,514.65 78.24,518.58 81.53,522.26 84.82,521.93 88.11,521.42 91.4,520.11 94.69,517.85 97.98,513.46 101.28,520.27 104.57,535.75 107.86,530.87 111.15,525.89 114.44,528.4 117.73,531.65 121.02,529.46 124.31,527.67 127.6,529.25 130.9,529.6 134.19,528.83 137.48,529.42 140.77,530.84 144.06,529.66 147.35,524.77 150.64,521.42 153.93,524.43 157.22,527.44 160.52,525.35 163.81,523.64 167.1,527.4 170.39,531.16 173.68,530.04 176.97,528.16 180.26,527.5 183.55,527.19 186.84,522.58 190.14,523.64 193.43,526.11 196.72,527.32 200.01,525.1 203.3,522.88 206.59,514.21 209.88,503.24 213.17,512.94 216.46,526.66 219.76,523.79 223.05,519.84 226.34,518.37 229.63,520.51 232.92,522.65 236.21,523.68 239.5,524.56 242.79,525.37 246.08,523.54 249.38,521.71 252.67,521.12 255.96,526.3 259.25,531.47 262.54,526.24 265.83,520.6 269.12,520.39 272.41,522.04 275.7,524.21 279,528.33 282.29,528.99 285.58,529.46 288.87,531.59 292.16,534.33 295.45,530.48 298.74,525.31 302.03,525.37 305.32,528.66 308.62,527.48 311.91,524.56 315.2,521.63 318.49,524.52 321.78,528.28 325.07,528.51 328.36,526.86 331.65,525.24 334.94,523.83 338.24,522.42 341.53,527.27 344.82,532.66 348.11,526.07 351.4,524.78 354.69,525.33 357.98,522.09 361.27,518.14 364.56,517.58 367.86,519.05 371.15,520.51 374.44,523.74 377.73,527.47 381.02,529.07 384.31,530.39 387.6,531.74 390.89,533.13 394.18,534.53 397.48,532.49 400.77,529.67 404.06,528.74 407.35,529.07 410.64,528.4 413.93,527.3 417.22,527.2 420.51,527.35 423.8,527.49 427.1,524.81 430.39,521.99 433.68,526.45 436.97,533.5 440.26,535.16 443.55,531.87 446.84,529.79 450.13,530.44 453.42,531.1 456.72,531.96 460.01,534.03 463.3,536.1 466.59,529.55 469.88,522.31 473.17,521.61 476.46,524.59 479.75,533.2 483.04,535.94 486.34,538.84 489.63,542.03 492.92,538.08 496.21,534.65 499.5,531.91 502.79,527.34 506.08,521.15 509.37,523.69 512.66,526.7 515.96,525.57 519.25,522.94 522.54,522.77 525.83,523.82 529.12,521.59 532.41,519.37 535.7,519.3 538.99,520.07 542.28,519.88 545.58,520.94 548.87,523.76 552.16,523.34 555.45,524.94 558.74,524.87 562.03,522.67 565.32,520.48 568.61,520.75 571.9,522.73 575.2,522.81 578.49,522.06 581.78,523.55 585.07,523.36 588.36,519.45 591.65,519.86 594.94,524.56 598.23,524.19 601.52,521.93 604.82,521.21 608.11,521.94 611.4,522.67 614.69,526.48 617.98,531.84 621.27,533.81 624.56,531.61 627.85,529.6 631.14,527.73 634.44,527.68 637.73,528.44 641.02,526.98 644.31,525.52 647.6,525.34 650.89,527.65 654.18,524.36 657.47,522.4 660.76,522.68 664.06,523.06 667.35,523.98 670.64,521.54 673.93,519.24 677.22,522.86 680.51,524.55 683.8,523.45 687.09,523.48 690.38,524.57 693.68,521.38 696.97,518.52 700.26,521.1 703.55,519.12 706.84,519.51 710.13,521.11 713.42,518.7 716.71,518.97 720,524.67 723.3,525.29 726.59,520.14 729.88,519.73 733.17,519.32 736.46,520.48 739.75,522.55 743.04,524.44 746.33,526.08 749.62,527.73 752.92,525.29 756.21,522.33 759.5,522.57 762.79,522.85 766.08,519.57 769.37,515.89 772.66,515.06 775.95,514.24 779.24,515.04 782.54,514.58 785.83,514.24 789.12,518.19 792.41,521.83 795.7,524.39 798.99,526.95 802.28,526.95 805.57,522.72 808.86,519.31 812.16,520.21 815.45,521.11 818.74,522 822.03,521.9 825.32,521.32 828.61,521.38 831.9,523.72 835.19,520.43 838.48,520.24 841.78,527.07 845.07,526.72 848.36,526.37 851.65,526.02 854.94,525.67 858.23,523.91 861.52,518.65 864.81,518.25 868.1,525.59 871.4,531.95 874.69,533.59 877.98,532.82 881.27,525.58 884.56,518.84 887.85,520.98 891.14,528.22 894.43,534.08 897.72,536.82 901.02,534.19 904.31,531.56 907.6,529.09 910.89,526.62 914.18,528.1 917.47,532.08 920.76,532.08 924.05,531.82 927.34,531.05 930.64,529.89 933.93,527.95 937.22,524.66 940.51,523.96 943.8,529.88 947.09,528.71 950.38,524.48 953.67,524.48 956.96,529 960.26,533.53 963.55,533.23 966.84,532.52 970.13,528.9 973.42,526.84 976.71,533.42 980,537.62 983.29,534.83 986.58,526.6 989.88,525.02 993.17,533.3 996.46,541.72 999.75,550.77 1003.04,559.82 1006.33,561.47 1009.62,559.28 1012.91,555.25 1016.2,551.34 1019.5,551.43 1022.79,554.06 1026.08,549.74 1029.37,537.67 1032.66,522.31 1035.95,506.95 1039.24,505.33 1042.53,506.2 1045.82,505.36 1049.12,504.42 1052.41,504.17 1055.7,504.17 1058.99,504.45 1062.28,505.84 1065.57,507.24 1068.86,508.15 1072.15,509.51 1075.44,518.44 1078.74,527.37 1082.03,522.61 1085.32,515.78 1088.61,512.84 1091.9,517.56 1095.19,522.17 1098.48,526.66 1101.77,531.15 1105.06,535.64 1108.36,535.79 1111.65,529.21 1114.94,527.7 1118.23,527.56 1121.52,525.32 1124.81,525.62 1128.1,527.78 1131.39,530.11 1134.68,532.75 1137.98,531.63 1141.27,529.43 1144.56,528.4 1147.85,527.52 1151.14,528.57 1154.43,529.3 1157.72,525.79 1161.01,522.28 1164.3,520.67 1167.6,525.37 1170.89,529.98 1174.18,528.67 1177.47,530.55 1180.76,532.43 1184.05,529.91 1187.34,527.92 1190.63,526.85 1193.92,526.13 1197.22,531.77 1200.51,537.42 1203.8,533.74 1207.09,528.25 1210.38,530.39 1213.67,533.02 1216.96,530.71 1220.25,527.48 1223.54,530.3 1226.84,533.12 1230.13,527.45 1233.42,521.31 1236.71,523.57 1240,525.83" fill="none" stroke="#1b5494" stroke-width="1.2" stroke-linejoin="round"/>
<polyline points="55.2,572.29 58.49,568.82 61.78,565.34 65.07,564.58 68.36,564.58 71.66,561.1 74.95,557.15 78.24,560.11 81.53,562.92 84.82,562.92 88.11,562.81 91.4,562.27 94.69,561.4 97.98,559.86 101.28,563.85 104.57,577.02 107.86,569.37 111.15,564.02 114.44,567.13 117.73,570.2 121.02,568.77 124.31,567.76 127.6,570.13 130.9,570.67 134.19,569.58 137.48,569.05 140.77,568.86 144.06,567.58 147.35,564.73 150.64,564.68 153.93,567.31 157.22,566.28 160.52,564.96 163.81,565.99 167.1,567.97 170.39,569.94 173.68,569.85 176.97,569.44 180.26,568.21 183.55,565.33 186.84,562.45 190.14,563.39 193.43,565.28 196.72,566.49 200.01,565.83 203.3,565.17 206.59,556.51 209.88,545 213.17,556.78 216.46,569.43 219.76,565.88 223.05,561.28 226.34,557.36 229.63,560.49 232.92,563.62 236.21,565.37 239.5,566.03 242.79,566.61 246.08,564.47 249.38,562.33 252.67,563.52 255.96,568.13 259.25,572.74 262.54,568.4 265.83,563.69 269.12,563.48 272.41,564.8 275.7,566.39 279,568.04 282.29,568.57 285.58,569.04 288.87,571.58 292.16,573.64 295.45,568.7 298.74,563.76 302.03,564.59 305.32,568.97 308.62,566.5 311.91,561.35 315.2,563.65 318.49,567.6 321.78,569.96 325.07,571.19 328.36,568.45 331.65,565.89 334.94,564.67 338.24,563.45 341.53,567 344.82,571.04 348.11,565.47 351.4,565.77 354.69,569.6 357.98,566.05 361.27,561.11 364.56,558.48 367.86,560.94 371.15,563.41 374.44,566.37 377.73,569.48 381.02,571.16 384.31,571.73 387.6,572.34 390.89,573.75 394.18,575.16 397.48,572.2 400.77,568.25 404.06,568.44 407.35,571.41 410.64,569.66 413.93,565.89 417.22,564.64 420.51,566.05 423.8,566.93 427.1,566.34 430.39,565.76 433.68,567.91 436.97,573.84 440.26,577.63 443.55,573.21 446.84,568.79 450.13,569.76 453.42,570.79 456.72,572.1 460.01,575.17 463.3,575.71 466.59,568.3 469.88,560.9 473.17,558.75 476.46,562.55 479.75,571.11 483.04,573.24 486.34,576.7 489.63,578.33 492.92,575.81 496.21,572.96 499.5,569.67 502.79,564.14 506.08,561.16 509.37,566.32 512.66,567.94 515.96,563.47 519.25,561.98 522.54,565.99 525.83,566.25 529.12,562.96 532.41,561.12 535.7,561.95 538.99,562.77 542.28,562.38 545.58,562.92 548.87,565.98 552.16,565.76 555.45,565.54 558.74,564.97 562.03,563.94 565.32,562.92 568.61,564.38 571.9,567.56 575.2,566.54 578.49,564.1 581.78,565.42 585.07,564.14 588.36,560.54 591.65,560.75 594.94,564.74 598.23,565.36 601.52,561.19 604.82,560.67 608.11,563.59 611.4,566.52 614.69,570.19 617.98,574.23 621.27,575.13 624.56,572.16 627.85,570.32 631.14,569.38 634.44,569.06 637.73,569.98 641.02,567.59 644.31,564.11 647.6,566.13 650.89,568.78 654.18,565.18 657.47,564.26 660.76,567.3 664.06,565.44 667.35,563.73 670.64,562.63 673.93,562.72 677.22,565.46 680.51,566.92 683.8,566.5 687.09,566.09 690.38,565.32 693.68,562.49 696.97,562.06 700.26,564.53 703.55,560.69 706.84,560.38 710.13,562.81 713.42,562.34 716.71,561.94 720,566.28 723.3,567.16 726.59,563.47 729.88,562.57 733.17,562.16 736.46,562.81 739.75,565.78 743.04,565.94 746.33,565.5 749.62,568.79 752.92,567.8 756.21,563.57 759.5,561.21 762.79,562.26 766.08,560.6 769.37,558.13 772.66,556.43 775.95,557.2 779.24,557.52 782.54,556.97 785.83,558.41 789.12,562.36 792.41,562.92 795.7,563.98 798.99,567.82 802.28,568.66 805.57,564.54 808.86,560.43 812.16,560.84 815.45,562.09 818.74,563.33 822.03,562.21 825.32,561.08 828.61,563.92 831.9,566.32 835.19,562.48 838.48,562.01 841.78,569.16 845.07,568.94 848.36,568.72 851.65,568.5 854.94,568.28 858.23,566.47 861.52,560.65 864.81,559.48 868.1,565.69 871.4,571.02 874.69,572.12 877.98,571.13 881.27,564.55 884.56,558.48 887.85,561.54 891.14,568.12 894.43,572.67 897.72,576.84 901.02,575.05 904.31,572.88 907.6,568.47 910.89,564.05 914.18,566.58 917.47,574.11 920.76,573.01 924.05,572.16 927.34,571.76 930.64,573.12 933.93,568.3 937.22,565.39 940.51,568.9 943.8,570.47 947.09,568.13 950.38,565.79 953.67,566.33 956.96,569.95 960.26,573.57 963.55,571.98 966.84,570.09 970.13,567.9 973.42,567.17 976.71,574.52 980,579.71 983.29,578.56 986.58,568.79 989.88,566.38 993.17,574.94 996.46,581.04 999.75,586.6 1003.04,592.17 1006.33,595.11 1009.62,593.01 1012.91,588.8 1016.2,585.47 1019.5,589.31 1022.79,589.22 1026.08,578.87 1029.37,568.69 1032.66,560.87 1035.95,553.05 1039.24,550.13 1042.53,551.56 1045.82,551.25 1049.12,550.02 1052.41,550.39 1055.7,550.77 1058.99,549.87 1062.28,550.62 1065.57,552.81 1068.86,554.86 1072.15,557.18 1075.44,563.21 1078.74,567.18 1082.03,562.06 1085.32,556.94 1088.61,554.65 1091.9,557.94 1095.19,561.95 1098.48,566.89 1101.77,571.83 1105.06,572.29 1108.36,571.14 1111.65,567.59 1114.94,568.32 1118.23,569.69 1121.52,566.4 1124.81,566.35 1128.1,568.7 1131.39,570.8 1134.68,572.45 1137.98,572.07 1141.27,569.33 1144.56,567.02 1147.85,565.04 1151.14,566.93 1154.43,566.95 1157.72,563.99 1161.01,563.59 1164.3,565.79 1167.6,567.98 1170.89,568.24 1174.18,567.75 1177.47,571.43 1180.76,572.01 1184.05,569.26 1187.34,566.39 1190.63,563.43 1193.92,567.65 1197.22,574.46 1200.51,575.28 1203.8,571.23 1207.09,568.13 1210.38,570.6 1213.67,573.07 1216.96,571.85 1220.25,569.21 1223.54,570.02 1226.84,571.55 1230.13,567.41 1233.42,562.98 1236.71,565.55 1240,568.12" fill="none" stroke="#2a72b8" stroke-width="1.2" stroke-linejoin="round"/>
<polyline points="55.2,610.42 58.49,607.79 61.78,605.16 65.07,604.41 68.36,604.19 71.66,602.91 74.95,601.48 78.24,602.54 81.53,603.78 84.82,606.58 88.11,606.01 91.4,604.69 94.69,604.58 97.98,604.67 101.28,608.99 104.57,613.31 107.86,609.01 111.15,605.9 114.44,607.12 117.73,608.33 121.02,608 124.31,607.91 127.6,609.79 130.9,611.67 134.19,611.14 137.48,610.32 140.77,609.01 144.06,606.85 147.35,605.11 150.64,605.86 153.93,606.61 157.22,606.23 160.52,605.76 163.81,606.8 167.1,608.44 170.39,609.71 173.68,609.24 176.97,608.77 180.26,609.54 183.55,607.1 186.84,603.26 190.14,604.08 193.43,606.06 196.72,606.25 200.01,606.25 203.3,606.25 206.59,601.66 209.88,595.43 213.17,601.46 216.46,607.94 219.76,605.37 223.05,602.21 226.34,599.05 229.63,600.78 232.92,603.94 236.21,607.1 239.5,607.29 242.79,605.58 246.08,603.87 249.38,603.65 252.67,605.29 255.96,606.94 259.25,609.78 262.54,608.98 265.83,606.1 269.12,603.69 272.41,605.01 275.7,606.32 279,607.64 282.29,608.75 285.58,609.92 288.87,612.44 292.16,613.93 295.45,609.57 298.74,605.21 302.03,606.59 305.32,611.53 308.62,608.97 311.91,603.49 315.2,603.85 318.49,605.49 321.78,606.86 325.07,607.51 328.36,608.17 331.65,607.78 334.94,607.05 338.24,606.32 341.53,607.7 344.82,609.3 348.11,604.18 351.4,605.09 354.69,609.15 357.98,606.78 361.27,603.21 364.56,602.8 367.86,604.28 371.15,605.78 374.44,607.43 377.73,609.07 381.02,609.93 384.31,610.18 387.6,610.45 390.89,611.39 394.18,612.33 397.48,609.97 400.77,606.87 404.06,607.27 407.35,610.01 410.64,609.38 413.93,607.31 417.22,606.39 420.51,606.68 423.8,606.98 427.1,607.08 430.39,607.08 433.68,608.51 436.97,611.89 440.26,613.95 443.55,610.84 446.84,607.74 450.13,609.52 453.42,611.35 456.72,612.94 460.01,613.13 463.3,613.32 466.59,607.76 469.88,601.74 473.17,601.12 476.46,603.38 479.75,610.29 483.04,613.11 486.34,615.28 489.63,614.83 492.92,612.95 496.21,610.46 499.5,607.17 502.79,603.88 506.08,603.46 509.37,605.1 512.66,606.5 515.96,603.21 519.25,602.84 522.54,605.8 525.83,606.05 529.12,604.24 532.41,602.53 535.7,603.26 538.99,603.99 542.28,604.89 545.58,606.54 548.87,607.78 552.16,608.03 555.45,608.27 558.74,606.01 562.03,602.94 565.32,604.38 568.61,606.58 571.9,608.73 575.2,606.76 578.49,605.86 581.78,606.41 585.07,605.04 588.36,601.95 591.65,602.42 594.94,606.41 598.23,607.17 601.52,603.33 604.82,602.59 608.11,604.78 611.4,606.97 614.69,609.77 617.98,612.88 621.27,613.94 624.56,612.52 627.85,611.51 631.14,610.85 634.44,609.7 637.73,607.56 641.02,605.42 644.31,606.06 647.6,607.37 650.89,607.65 654.18,605.13 657.47,604.76 660.76,607.48 664.06,605.28 667.35,603.65 670.64,604.2 673.93,604.75 677.22,605.3 680.51,605.62 683.8,605.62 687.09,605.62 690.38,607.79 693.68,606.74 696.97,605.34 700.26,605.58 703.55,602.84 706.84,602.06 710.13,603.29 713.42,604.86 716.71,607.35 720,609.84 723.3,609.15 726.59,604.28 729.88,603.54 733.17,603.54 736.46,605.03 739.75,607.38 743.04,607.92 746.33,606.5 749.62,608.15 752.92,607.92 756.21,604.63 759.5,602.81 762.79,603.69 766.08,603.04 769.37,600.58 772.66,598.11 775.95,599.33 779.24,600.83 782.54,600.83 785.83,601.11 789.12,603.3 792.41,605.4 795.7,607.15 798.99,607.87 802.28,606.44 805.57,605.22 808.86,604.27 812.16,603.32 815.45,604.29 818.74,606.66 822.03,605.68 825.32,604.7 828.61,605.24 831.9,606.5 835.19,603.53 838.48,603.43 841.78,609.77 845.07,609.2 848.36,608.63 851.65,608.06 854.94,607.49 858.23,606.36 861.52,603.82 864.81,601.77 868.1,606.15 871.4,609.79 874.69,609.79 877.98,608.85 881.27,605.37 884.56,602.11 887.85,603.11 891.14,608.81 894.43,613.2 897.72,612.54 901.02,611.88 904.31,609.48 907.6,607.07 910.89,605.28 914.18,607.26 917.47,608.7 920.76,608.48 924.05,608.6 927.34,609.37 930.64,608.53 933.93,605.71 937.22,604.38 940.51,608 943.8,610.06 947.09,608.98 950.38,607.91 953.67,606.83 956.96,609 960.26,611.74 963.55,610.69 966.84,609.45 970.13,608.16 973.42,606.45 976.71,609.53 980,617.03 983.29,614.62 986.58,604.63 989.88,606.11 993.17,611.6 996.46,616.78 999.75,620.65 1003.04,624.53 1006.33,626.41 1009.62,624.44 1012.91,621.59 1016.2,617.64 1019.5,620.48 1022.79,621.64 1026.08,615.53 1029.37,609.49 1032.66,604.59 1035.95,599.69 1039.24,595.97 1042.53,596.63 1045.82,594.9 1049.12,593.18 1052.41,594.41 1055.7,595.63 1058.99,595.29 1062.28,594.63 1065.57,594.73 1068.86,596.61 1072.15,598.7 1075.44,603.09 1078.74,606.18 1082.03,603.55 1085.32,601.31 1088.61,599.41 1091.9,601.05 1095.19,603.05 1098.48,607.56 1101.77,612.07 1105.06,611.01 1108.36,609.36 1111.65,608.92 1114.94,610.5 1118.23,608.75 1121.52,606.92 1124.81,608.16 1128.1,609.39 1131.39,610.01 1134.68,610.34 1137.98,609.31 1141.27,607.88 1144.56,608 1147.85,608.33 1151.14,608.98 1154.43,606.51 1157.72,602.78 1161.01,602.35 1164.3,603.82 1167.6,606.24 1170.89,606.91 1174.18,606.89 1177.47,610.18 1180.76,610.65 1184.05,608.13 1187.34,606.75 1190.63,606.17 1193.92,605.95 1197.22,612.04 1200.51,610.74 1203.8,607.45 1207.09,608.72 1210.38,610.56 1213.67,612.41 1216.96,611.13 1220.25,608.66 1223.54,606.98 1226.84,608.63 1230.13,606.52 1233.42,604.24 1236.71,607.01 1240,609.79" fill="none" stroke="#4a90d6" stroke-width="1.2" stroke-linejoin="round"/>
<polyline points="55.2,648.33 58.49,646.73 61.78,645.12 65.07,643.92 68.36,645.07 71.66,644.53 74.95,643.76 78.24,645.58 81.53,647.24 84.82,646.58 88.11,645.92 91.4,645.26 94.69,645.51 97.98,645.88 101.28,648.12 104.57,648.51 107.86,646.54 111.15,647.66 114.44,649.3 117.73,645.91 121.02,642.69 124.31,645.98 127.6,648.75 130.9,648.75 134.19,648.75 137.48,648.75 140.77,649.08 144.06,649.27 147.35,648.2 150.64,647.14 153.93,646.67 157.22,646.67 160.52,647.44 163.81,648.61 167.1,649.78 170.39,648.77 173.68,647.27 176.97,647.19 180.26,648.07 183.55,646.41 186.84,643.67 190.14,644.44 193.43,646.09 196.72,646.05 200.01,645.83 203.3,643.77 206.59,641.71 209.88,643.7 213.17,645.78 216.46,647.64 219.76,649.36 223.05,646.86 226.34,644.33 229.63,645.19 232.92,647.06 236.21,647.29 239.5,647.29 242.79,647.37 246.08,647.59 249.38,647.81 252.67,648.2 255.96,648.78 259.25,649.35 262.54,647.76 265.83,646.08 269.12,644.75 272.41,646.23 275.7,647.71 279,647.19 282.29,645.21 285.58,647.43 288.87,649.65 292.16,650.01 295.45,648.26 298.74,646.5 302.03,646.34 305.32,647.16 308.62,647.84 311.91,646.96 315.2,646.16 318.49,645.69 321.78,645.22 325.07,647.93 328.36,647.62 331.65,646.02 334.94,646.01 338.24,647.66 341.53,649.3 344.82,647.57 348.11,645.69 351.4,646.84 354.69,649.03 357.98,647.79 361.27,645.91 364.56,645.72 367.86,646.55 371.15,647.31 374.44,647.51 377.73,647.71 381.02,647.9 384.31,648.96 387.6,650.08 390.89,651.2 394.18,649.76 397.48,647.54 400.77,646.03 404.06,646.85 407.35,647.67 410.64,647.57 413.93,647.08 417.22,646.75 420.51,647.24 423.8,647.74 427.1,647.6 430.39,647.11 433.68,646.94 436.97,649.58 440.26,650 443.55,648.4 446.84,647.6 450.13,648.62 453.42,649.64 456.72,650.66 460.01,650.06 463.3,649.12 466.59,647.28 469.88,644.87 473.17,645.73 476.46,647.92 479.75,649.48 483.04,650.89 486.34,651.46 489.63,651.46 492.92,650.16 496.21,648.29 499.5,646.72 502.79,645.21 506.08,645.57 509.37,647.26 512.66,647.45 515.96,645.04 519.25,644.88 522.54,647.29 525.83,647.92 529.12,647.19 532.41,646.45 535.7,647.14 538.99,648.37 542.28,649.27 545.58,648.72 548.87,648.18 552.16,647.63 555.45,646.92 558.74,645.97 562.03,645.02 565.32,645.75 568.61,647.92 571.9,648.77 575.2,646.9 578.49,646.16 581.78,646.93 585.07,646.25 588.36,644.28 591.65,646.65 594.94,649.29 598.23,648.08 601.52,645.45 604.82,644.89 608.11,646.31 611.4,647.73 614.69,649.15 617.98,650.13 621.27,650.46 624.56,650.79 627.85,649.88 631.14,648.79 634.44,647.64 637.73,646.48 641.02,645.95 644.31,646.21 647.6,646.47 650.89,646.37 654.18,645.27 657.47,645.68 660.76,647.82 664.06,643.85 667.35,644.51 670.64,645.17 673.93,645.98 677.22,646.81 680.51,647.13 683.8,646.75 687.09,646.37 690.38,645.98 693.68,646.97 696.97,648.84 700.26,647.03 703.55,643.74 706.84,643.06 710.13,645.04 713.42,644.95 716.71,644.67 720,648.03 723.3,650.15 726.59,648.57 729.88,647.22 733.17,645.9 736.46,644.58 739.75,647.61 743.04,648.46 746.33,646.26 749.62,646.63 752.92,647.47 756.21,645.21 759.5,644.22 762.79,645.53 766.08,645.95 769.37,645.29 772.66,644.63 775.95,644.05 779.24,643.48 782.54,643.55 785.83,644.65 789.12,644.94 792.41,644.39 795.7,645.56 798.99,647.91 802.28,648.84 805.57,647.43 808.86,646.16 812.16,645.61 815.45,645.27 818.74,645.52 822.03,645.77 825.32,646.43 828.61,647.26 831.9,647.39 835.19,644.76 838.48,647.24 841.78,649.98 845.07,649.37 848.36,648.76 851.65,648.15 854.94,647.53 858.23,647.05 861.52,646.65 864.81,645.73 868.1,646.36 871.4,648.99 874.69,649.38 877.98,647.76 881.27,645.02 884.56,645.58 887.85,647.64 891.14,649.41 894.43,649.67 897.72,649.92 901.02,650.17 904.31,650.35 907.6,648.7 910.89,647.29 914.18,647.29 917.47,646.95 920.76,645.54 924.05,644.2 927.34,645.25 930.64,645.2 933.93,643.77 937.22,644.57 940.51,647.2 943.8,646.97 947.09,646.75 950.38,647.97 953.67,649.19 956.96,650.03 960.26,650.8 963.55,649.58 966.84,648.26 970.13,646.95 973.42,646.4 976.71,650.13 980,652.03 983.29,648.55 986.58,645.31 989.88,647.84 993.17,650.38 996.46,651.92 999.75,653.71 1003.04,657 1006.33,658.41 1009.62,656.19 1012.91,653.97 1016.2,654.53 1019.5,655.75 1022.79,653.52 1026.08,648.91 1029.37,644.51 1032.66,643.36 1035.95,642.21 1039.24,641.23 1042.53,640.41 1045.82,639.59 1049.12,641.46 1052.41,643.34 1055.7,642.79 1058.99,641.57 1062.28,639.77 1065.57,637.54 1068.86,640.88 1072.15,644.32 1075.44,647.19 1078.74,646.41 1082.03,645.63 1085.32,644.85 1088.61,644.77 1091.9,645.05 1095.19,646.29 1098.48,648.76 1101.77,651.23 1105.06,649.5 1108.36,647.34 1111.65,648.12 1114.94,649.84 1118.23,648.36 1121.52,646.88 1124.81,646.82 1128.1,647.81 1131.39,648.79 1134.68,648.9 1137.98,647.89 1141.27,647.69 1144.56,647.49 1147.85,647.3 1151.14,648.9 1154.43,646.56 1157.72,643.27 1161.01,644.37 1164.3,645.46 1167.6,646.25 1170.89,646.25 1174.18,646.43 1177.47,649.06 1180.76,649.62 1184.05,647.97 1187.34,646.33 1190.63,647.29 1193.92,648.39 1197.22,649.31 1200.51,648.65 1203.8,647.99 1207.09,648.7 1210.38,649.57 1213.67,650.37 1216.96,649.24 1220.25,648.12 1223.54,648.82 1226.84,649.92 1230.13,648.17 1233.42,646.3 1236.71,648.36 1240,650.42" fill="none" stroke="#bcd8ee" stroke-width="1.2" stroke-linejoin="round"/>
<line x1="59" y1="475" x2="59" y2="687.7" stroke="rgba(204,204,220,0.12)" stroke-width="1"/>
<line x1="157.94" y1="475" x2="157.94" y2="687.7" stroke="rgba(204,204,220,0.12)" stroke-width="1"/>
<line x1="256.88" y1="475" x2="256.88" y2="687.7" stroke="rgba(204,204,220,0.12)" stroke-width="1"/>
<line x1="355.82" y1="475" x2="355.82" y2="687.7" stroke="rgba(204,204,220,0.12)" stroke-width="1"/>
<line x1="454.76" y1="475" x2="454.76" y2="687.7" stroke="rgba(204,204,220,0.12)" stroke-width="1"/>
<line x1="553.7" y1="475" x2="553.7" y2="687.7" stroke="rgba(204,204,220,0.12)" stroke-width="1"/>
<line x1="652.64" y1="475" x2="652.64" y2="687.7" stroke="rgba(204,204,220,0.12)" stroke-width="1"/>
<line x1="751.58" y1="475" x2="751.58" y2="687.7" stroke="rgba(204,204,220,0.12)" stroke-width="1"/>
<line x1="850.52" y1="475" x2="850.52" y2="687.7" stroke="rgba(204,204,220,0.12)" stroke-width="1"/>
<line x1="949.46" y1="475" x2="949.46" y2="687.7" stroke="rgba(204,204,220,0.12)" stroke-width="1"/>
<line x1="1048.4" y1="475" x2="1048.4" y2="687.7" stroke="rgba(204,204,220,0.12)" stroke-width="1"/>
<line x1="1147.34" y1="475" x2="1147.34" y2="687.7" stroke="rgba(204,204,220,0.12)" stroke-width="1"/>
<line x1="53.3" y1="687.7" x2="1243" y2="687.7" stroke="rgba(204,204,220,0.08)" stroke-width="1"/>
<line x1="53.3" y1="616.8" x2="1243" y2="616.8" stroke="rgba(204,204,220,0.08)" stroke-width="1"/>
<line x1="53.3" y1="545.9" x2="1243" y2="545.9" stroke="rgba(204,204,220,0.08)" stroke-width="1"/>
<line x1="53.3" y1="475" x2="1243" y2="475" stroke="rgba(204,204,220,0.08)" stroke-width="1"/>
<rect x="35" y="733" width="15" height="4.6" rx="2.3" fill="#b6dcf6"/>
<text x="66.7" y="739.5" font-size="14.5" fill="#ccccdc" stroke="#ccccdc" stroke-width="0.2" >web_server_01</text>
<rect x="183" y="733" width="15" height="4.6" rx="2.3" fill="#4d93d8"/>
<text x="215" y="739.5" font-size="14.5" fill="#ccccdc" stroke="#ccccdc" stroke-width="0.2" >web_server_02</text>
<rect x="333" y="733" width="15" height="4.6" rx="2.3" fill="#2b82d4"/>
<text x="365" y="739.5" font-size="14.5" fill="#ccccdc" stroke="#ccccdc" stroke-width="0.2" >web_server_03</text>
<rect x="483" y="733" width="15" height="4.6" rx="2.3" fill="#0f4a8f"/>
<text x="515" y="739.5" font-size="14.5" fill="#ccccdc" stroke="#ccccdc" stroke-width="0.2" >web_server_04</text>
<rect x="1282.5" y="416.5" width="625" height="340" rx="2" fill="#181b1f" stroke="rgba(204,204,220,0.09)" stroke-width="1"/>
<text x="1292.8" y="441.3" font-size="17" fill="#ccccdc" stroke="#ccccdc" stroke-width="0.45" textLength="89.3" lengthAdjust="spacingAndGlyphs" >Google hits</text>
<rect x="1292.8" y="495.6" width="111.4" height="224.8" rx="1.5" fill="#232429"/>
<rect x="1292.8" y="719.5" width="111.4" height="0.9" fill="#2e486e"/>
<rect x="1292.8" y="719.5" width="111.4" height="2.5" rx="1" fill="#5794f2"/>
<text x="1348.5" y="487.9" font-size="29" fill="#5794f2" text-anchor="middle" stroke="#5794f2" stroke-width="0.5" textLength="78.1" lengthAdjust="spacingAndGlyphs" >0.400</text>
<text x="1348.5" y="739.6" font-size="17" fill="#ccccdc" text-anchor="middle" stroke="#ccccdc" stroke-width="0.2" textLength="64.4" lengthAdjust="spacingAndGlyphs" >A-series</text>
<rect x="1416" y="495.6" width="111.7" height="224.8" rx="1.5" fill="#232429"/>
<rect x="1416" y="658.3" width="111.7" height="62.1" fill="#2e486e"/>
<rect x="1416" y="658.3" width="111.7" height="2.5" rx="1" fill="#5794f2"/>
<text x="1471.85" y="487.9" font-size="29" fill="#5794f2" text-anchor="middle" stroke="#5794f2" stroke-width="0.5" textLength="52" lengthAdjust="spacingAndGlyphs" >27.7</text>
<text x="1471.85" y="739.6" font-size="17" fill="#ccccdc" text-anchor="middle" stroke="#ccccdc" stroke-width="0.2" textLength="64.1" lengthAdjust="spacingAndGlyphs" >B-series</text>
<rect x="1539.4" y="495.6" width="111.4" height="224.8" rx="1.5" fill="#232429"/>
<rect x="1539.4" y="635.8" width="111.4" height="84.6" fill="#2e486e"/>
<rect x="1539.4" y="635.8" width="111.4" height="2.5" rx="1" fill="#5794f2"/>
<text x="1595.1" y="487.9" font-size="29" fill="#5794f2" text-anchor="middle" stroke="#5794f2" stroke-width="0.5" textLength="47" lengthAdjust="spacingAndGlyphs" >37.1</text>
<text x="1595.1" y="739.6" font-size="17" fill="#ccccdc" text-anchor="middle" stroke="#ccccdc" stroke-width="0.2" textLength="65.1" lengthAdjust="spacingAndGlyphs" >C-series</text>
<rect x="1663.3" y="495.6" width="111.3" height="224.8" rx="1.5" fill="#232429"/>
<rect x="1663.3" y="567.7" width="111.3" height="152.7" fill="#503c60"/>
<rect x="1663.3" y="567.7" width="111.3" height="2.5" rx="1" fill="#b877d9"/>
<text x="1718.95" y="487.9" font-size="29" fill="#b877d9" text-anchor="middle" stroke="#b877d9" stroke-width="0.5" textLength="58.7" lengthAdjust="spacingAndGlyphs" >66.5</text>
<text x="1718.95" y="739.6" font-size="17" fill="#ccccdc" text-anchor="middle" stroke="#ccccdc" stroke-width="0.2" textLength="64.8" lengthAdjust="spacingAndGlyphs" >D-series</text>
<rect x="1786.2" y="495.6" width="111.4" height="224.8" rx="1.5" fill="#232429"/>
<rect x="1786.2" y="672.8" width="111.4" height="47.6" fill="#2e486e"/>
<rect x="1786.2" y="672.8" width="111.4" height="2.5" rx="1" fill="#5794f2"/>
<text x="1841.9" y="487.9" font-size="29" fill="#5794f2" text-anchor="middle" stroke="#5794f2" stroke-width="0.5" textLength="53.7" lengthAdjust="spacingAndGlyphs" >21.2</text>
<text x="1841.9" y="739.6" font-size="17" fill="#ccccdc" text-anchor="middle" stroke="#ccccdc" stroke-width="0.2" textLength="63.7" lengthAdjust="spacingAndGlyphs" >E-series</text>
<rect x="12.5" y="766.5" width="1895" height="296" rx="2" fill="#181b1f" stroke="rgba(204,204,220,0.09)" stroke-width="1"/>
<text x="959.7" y="791.1" font-size="17" fill="#ccccdc" text-anchor="middle" stroke="#ccccdc" stroke-width="0.45" textLength="187" lengthAdjust="spacingAndGlyphs" >client side full page load</text>
<line x1="61.7" y1="1024.3" x2="1699" y2="1024.3" stroke="rgba(204,204,220,0.17)" stroke-width="1"/>
<text x="54.3" y="1029.3" font-size="14.5" fill="#ccccdc" text-anchor="end" stroke="#ccccdc" stroke-width="0.2" >0 ms</text>
<line x1="61.7" y1="984.44" x2="1699" y2="984.44" stroke="rgba(204,204,220,0.17)" stroke-width="1"/>
<text x="54.3" y="989.44" font-size="14.5" fill="#ccccdc" text-anchor="end" stroke="#ccccdc" stroke-width="0.2" >1 s</text>
<line x1="61.7" y1="944.58" x2="1699" y2="944.58" stroke="rgba(204,204,220,0.17)" stroke-width="1"/>
<text x="54.3" y="949.58" font-size="14.5" fill="#ccccdc" text-anchor="end" stroke="#ccccdc" stroke-width="0.2" >2 s</text>
<line x1="61.7" y1="904.72" x2="1699" y2="904.72" stroke="rgba(204,204,220,0.17)" stroke-width="1"/>
<text x="54.3" y="909.72" font-size="14.5" fill="#ccccdc" text-anchor="end" stroke="#ccccdc" stroke-width="0.2" >3 s</text>
<line x1="61.7" y1="864.86" x2="1699" y2="864.86" stroke="rgba(204,204,220,0.17)" stroke-width="1"/>
<text x="54.3" y="869.86" font-size="14.5" fill="#ccccdc" text-anchor="end" stroke="#ccccdc" stroke-width="0.2" >4 s</text>
<line x1="61.7" y1="825" x2="1699" y2="825" stroke="rgba(204,204,220,0.17)" stroke-width="1"/>
<text x="54.3" y="830" font-size="14.5" fill="#ccccdc" text-anchor="end" stroke="#ccccdc" stroke-width="0.2" >5 s</text>
<line x1="68.3" y1="825" x2="68.3" y2="1024.3" stroke="rgba(204,204,220,0.17)" stroke-width="1"/>
<text x="68.3" y="1047" font-size="14.5" fill="#ccccdc" text-anchor="middle" stroke="#ccccdc" stroke-width="0.2" textLength="34.28" lengthAdjust="spacingAndGlyphs" >16:50</text>
<line x1="204.57" y1="825" x2="204.57" y2="1024.3" stroke="rgba(204,204,220,0.17)" stroke-width="1"/>
<text x="204.57" y="1047" font-size="14.5" fill="#ccccdc" text-anchor="middle" stroke="#ccccdc" stroke-width="0.2" textLength="34.28" lengthAdjust="spacingAndGlyphs" >16:55</text>
<line x1="340.84" y1="825" x2="340.84" y2="1024.3" stroke="rgba(204,204,220,0.17)" stroke-width="1"/>
<text x="340.84" y="1047" font-size="14.5" fill="#ccccdc" text-anchor="middle" stroke="#ccccdc" stroke-width="0.2" textLength="34.28" lengthAdjust="spacingAndGlyphs" >17:00</text>
<line x1="477.11" y1="825" x2="477.11" y2="1024.3" stroke="rgba(204,204,220,0.17)" stroke-width="1"/>
<text x="477.11" y="1047" font-size="14.5" fill="#ccccdc" text-anchor="middle" stroke="#ccccdc" stroke-width="0.2" textLength="34.28" lengthAdjust="spacingAndGlyphs" >17:05</text>
<line x1="613.38" y1="825" x2="613.38" y2="1024.3" stroke="rgba(204,204,220,0.17)" stroke-width="1"/>
<text x="613.38" y="1047" font-size="14.5" fill="#ccccdc" text-anchor="middle" stroke="#ccccdc" stroke-width="0.2" textLength="32.28" lengthAdjust="spacingAndGlyphs" >17:10</text>
<line x1="749.65" y1="825" x2="749.65" y2="1024.3" stroke="rgba(204,204,220,0.17)" stroke-width="1"/>
<text x="749.65" y="1047" font-size="14.5" fill="#ccccdc" text-anchor="middle" stroke="#ccccdc" stroke-width="0.2" textLength="32.28" lengthAdjust="spacingAndGlyphs" >17:15</text>
<line x1="885.92" y1="825" x2="885.92" y2="1024.3" stroke="rgba(204,204,220,0.17)" stroke-width="1"/>
<text x="885.92" y="1047" font-size="14.5" fill="#ccccdc" text-anchor="middle" stroke="#ccccdc" stroke-width="0.2" textLength="34.28" lengthAdjust="spacingAndGlyphs" >17:20</text>
<line x1="1022.19" y1="825" x2="1022.19" y2="1024.3" stroke="rgba(204,204,220,0.17)" stroke-width="1"/>
<text x="1022.19" y="1047" font-size="14.5" fill="#ccccdc" text-anchor="middle" stroke="#ccccdc" stroke-width="0.2" textLength="34.28" lengthAdjust="spacingAndGlyphs" >17:25</text>
<line x1="1158.46" y1="825" x2="1158.46" y2="1024.3" stroke="rgba(204,204,220,0.17)" stroke-width="1"/>
<text x="1158.46" y="1047" font-size="14.5" fill="#ccccdc" text-anchor="middle" stroke="#ccccdc" stroke-width="0.2" textLength="34.28" lengthAdjust="spacingAndGlyphs" >17:30</text>
<line x1="1294.73" y1="825" x2="1294.73" y2="1024.3" stroke="rgba(204,204,220,0.17)" stroke-width="1"/>
<text x="1294.73" y="1047" font-size="14.5" fill="#ccccdc" text-anchor="middle" stroke="#ccccdc" stroke-width="0.2" textLength="34.28" lengthAdjust="spacingAndGlyphs" >17:35</text>
<line x1="1431" y1="825" x2="1431" y2="1024.3" stroke="rgba(204,204,220,0.17)" stroke-width="1"/>
<text x="1431" y="1047" font-size="14.5" fill="#ccccdc" text-anchor="middle" stroke="#ccccdc" stroke-width="0.2" textLength="34.28" lengthAdjust="spacingAndGlyphs" >17:40</text>
<line x1="1567.27" y1="825" x2="1567.27" y2="1024.3" stroke="rgba(204,204,220,0.17)" stroke-width="1"/>
<text x="1567.27" y="1047" font-size="14.5" fill="#ccccdc" text-anchor="middle" stroke="#ccccdc" stroke-width="0.2" textLength="34.28" lengthAdjust="spacingAndGlyphs" >17:45</text>
<rect x="61.7" y="890" width="24.3" height="67.7" fill="#e24d42"/>
<rect x="61.7" y="957.7" width="24.3" height="41.6" fill="#ef843c"/>
<rect x="61.7" y="999.3" width="24.3" height="21.4" fill="#eab839"/>
<rect x="61.7" y="1020.7" width="24.3" height="3.6" fill="#f2c96d"/>
<rect x="122.7" y="939.3" width="72.6" height="37.4" fill="#e24d42"/>
<rect x="122.7" y="976.7" width="72.6" height="30" fill="#ef843c"/>
<rect x="122.7" y="1006.7" width="72.6" height="17.6" fill="#eab839"/>
<rect x="122.7" y="1024.3" width="72.6" height="0" fill="#f2c96d"/>
<rect x="231.7" y="898.3" width="72.6" height="59.4" fill="#e24d42"/>
<rect x="231.7" y="957.7" width="72.6" height="40.3" fill="#ef843c"/>
<rect x="231.7" y="998" width="72.6" height="22.7" fill="#eab839"/>
<rect x="231.7" y="1020.7" width="72.6" height="3.6" fill="#f2c96d"/>
<rect x="340.3" y="900.7" width="73" height="58.3" fill="#e24d42"/>
<rect x="340.3" y="959" width="73" height="40" fill="#ef843c"/>
<rect x="340.3" y="999" width="73" height="21.7" fill="#eab839"/>
<rect x="340.3" y="1020.7" width="73" height="3.6" fill="#f2c96d"/>
<rect x="450" y="911.3" width="72.7" height="52.7" fill="#e24d42"/>
<rect x="450" y="964" width="72.7" height="38" fill="#ef843c"/>
<rect x="450" y="1002" width="72.7" height="18.7" fill="#eab839"/>
<rect x="450" y="1020.7" width="72.7" height="3.6" fill="#f2c96d"/>
<rect x="559" y="915" width="72.7" height="46" fill="#e24d42"/>
<rect x="559" y="961" width="72.7" height="38.3" fill="#ef843c"/>
<rect x="559" y="999.3" width="72.7" height="20" fill="#eab839"/>
<rect x="559" y="1019.3" width="72.7" height="5" fill="#f2c96d"/>
<rect x="668.3" y="915" width="72.4" height="53.3" fill="#e24d42"/>
<rect x="668.3" y="968.3" width="72.4" height="32.4" fill="#ef843c"/>
<rect x="668.3" y="1000.7" width="72.4" height="18.6" fill="#eab839"/>
<rect x="668.3" y="1019.3" width="72.4" height="5" fill="#f2c96d"/>
<rect x="777.3" y="899.7" width="72.7" height="54.6" fill="#e24d42"/>
<rect x="777.3" y="954.3" width="72.7" height="42.7" fill="#ef843c"/>
<rect x="777.3" y="997" width="72.7" height="21.3" fill="#eab839"/>
<rect x="777.3" y="1018.3" width="72.7" height="6" fill="#f2c96d"/>
<rect x="886.3" y="866" width="72.7" height="74" fill="#e24d42"/>
<rect x="886.3" y="940" width="72.7" height="54" fill="#ef843c"/>
<rect x="886.3" y="994" width="72.7" height="22.7" fill="#eab839"/>
<rect x="886.3" y="1016.7" width="72.7" height="7.6" fill="#f2c96d"/>
<rect x="995.7" y="908.7" width="72.6" height="51.3" fill="#e24d42"/>
<rect x="995.7" y="960" width="72.6" height="36" fill="#ef843c"/>
<rect x="995.7" y="996" width="72.6" height="21.7" fill="#eab839"/>
<rect x="995.7" y="1017.7" width="72.6" height="6.6" fill="#f2c96d"/>
<rect x="1104.7" y="866" width="72.6" height="70.7" fill="#e24d42"/>
<rect x="1104.7" y="936.7" width="72.6" height="52.3" fill="#ef843c"/>
<rect x="1104.7" y="989" width="72.6" height="25.3" fill="#eab839"/>
<rect x="1104.7" y="1014.3" width="72.6" height="10" fill="#f2c96d"/>
<rect x="1213.7" y="898" width="73" height="58.7" fill="#e24d42"/>
<rect x="1213.7" y="956.7" width="73" height="44" fill="#ef843c"/>
<rect x="1213.7" y="1000.7" width="73" height="18.6" fill="#eab839"/>
<rect x="1213.7" y="1019.3" width="73" height="5" fill="#f2c96d"/>
<rect x="1322.7" y="871" width="73" height="75.7" fill="#e24d42"/>
<rect x="1322.7" y="946.7" width="73" height="48" fill="#ef843c"/>
<rect x="1322.7" y="994.7" width="73" height="22" fill="#eab839"/>
<rect x="1322.7" y="1016.7" width="73" height="7.6" fill="#f2c96d"/>
<rect x="1432" y="892.7" width="72.7" height="54" fill="#e24d42"/>
<rect x="1432" y="946.7" width="72.7" height="43.3" fill="#ef843c"/>
<rect x="1432" y="990" width="72.7" height="26" fill="#eab839"/>
<rect x="1432" y="1016" width="72.7" height="8.3" fill="#f2c96d"/>
<rect x="1541" y="868.3" width="72.7" height="69.4" fill="#e24d42"/>
<rect x="1541" y="937.7" width="72.7" height="47.3" fill="#ef843c"/>
<rect x="1541" y="985" width="72.7" height="30" fill="#eab839"/>
<rect x="1541" y="1015" width="72.7" height="9.3" fill="#f2c96d"/>
<rect x="1650" y="911.7" width="49" height="54" fill="#e24d42"/>
<rect x="1650" y="965.7" width="49" height="40" fill="#ef843c"/>
<rect x="1650" y="1005.7" width="49" height="17" fill="#eab839"/>
<rect x="1650" y="1022.7" width="49" height="1.6" fill="#f2c96d"/>
<text x="1868" y="835" font-size="14.5" fill="#33a2e5" text-anchor="middle" stroke="#33a2e5" stroke-width="0.2" >avg</text>
<rect x="1726.7" y="856.8" width="16" height="4.6" rx="2.3" fill="#f9e2d2"/>
<text x="1755" y="864.1" font-size="14.5" fill="#ccccdc" stroke="#ccccdc" stroke-width="0.2" >upper_25</text>
<text x="1889" y="864.1" font-size="14.5" fill="#ccccdc" text-anchor="end" stroke="#ccccdc" stroke-width="0.2" >6.81 ms</text>
<rect x="1724" y="873.7" width="167.7" height="30.5" fill="#202226"/>
<rect x="1726.7" y="887.7" width="16" height="4.6" rx="2.3" fill="#f2c96d"/>
<text x="1755" y="895" font-size="14.5" fill="#ccccdc" stroke="#ccccdc" stroke-width="0.2" >upper_50</text>
<text x="1889" y="895" font-size="14.5" fill="#ccccdc" text-anchor="end" stroke="#ccccdc" stroke-width="0.2" >142 ms</text>
<rect x="1726.7" y="918.6" width="16" height="4.6" rx="2.3" fill="#eab839"/>
<text x="1755" y="925.9" font-size="14.5" fill="#ccccdc" stroke="#ccccdc" stroke-width="0.2" >upper_75</text>
<text x="1889" y="925.9" font-size="14.5" fill="#ccccdc" text-anchor="end" stroke="#ccccdc" stroke-width="0.2" >535 ms</text>
<rect x="1724" y="935.5" width="167.7" height="30.5" fill="#202226"/>
<rect x="1726.7" y="949.5" width="16" height="4.6" rx="2.3" fill="#ef843c"/>
<text x="1755" y="956.8" font-size="14.5" fill="#ccccdc" stroke="#ccccdc" stroke-width="0.2" >upper_90</text>
<text x="1889" y="956.8" font-size="14.5" fill="#ccccdc" text-anchor="end" stroke="#ccccdc" stroke-width="0.2" >1.04 s</text>
<rect x="1726.7" y="980.4" width="16" height="4.6" rx="2.3" fill="#e24d42"/>
<text x="1755" y="987.7" font-size="14.5" fill="#ccccdc" stroke="#ccccdc" stroke-width="0.2" >upper_95</text>
<text x="1889" y="987.7" font-size="14.5" fill="#ccccdc" text-anchor="end" stroke="#ccccdc" stroke-width="0.2" >1.46 s</text>
</svg>
</body></html>
